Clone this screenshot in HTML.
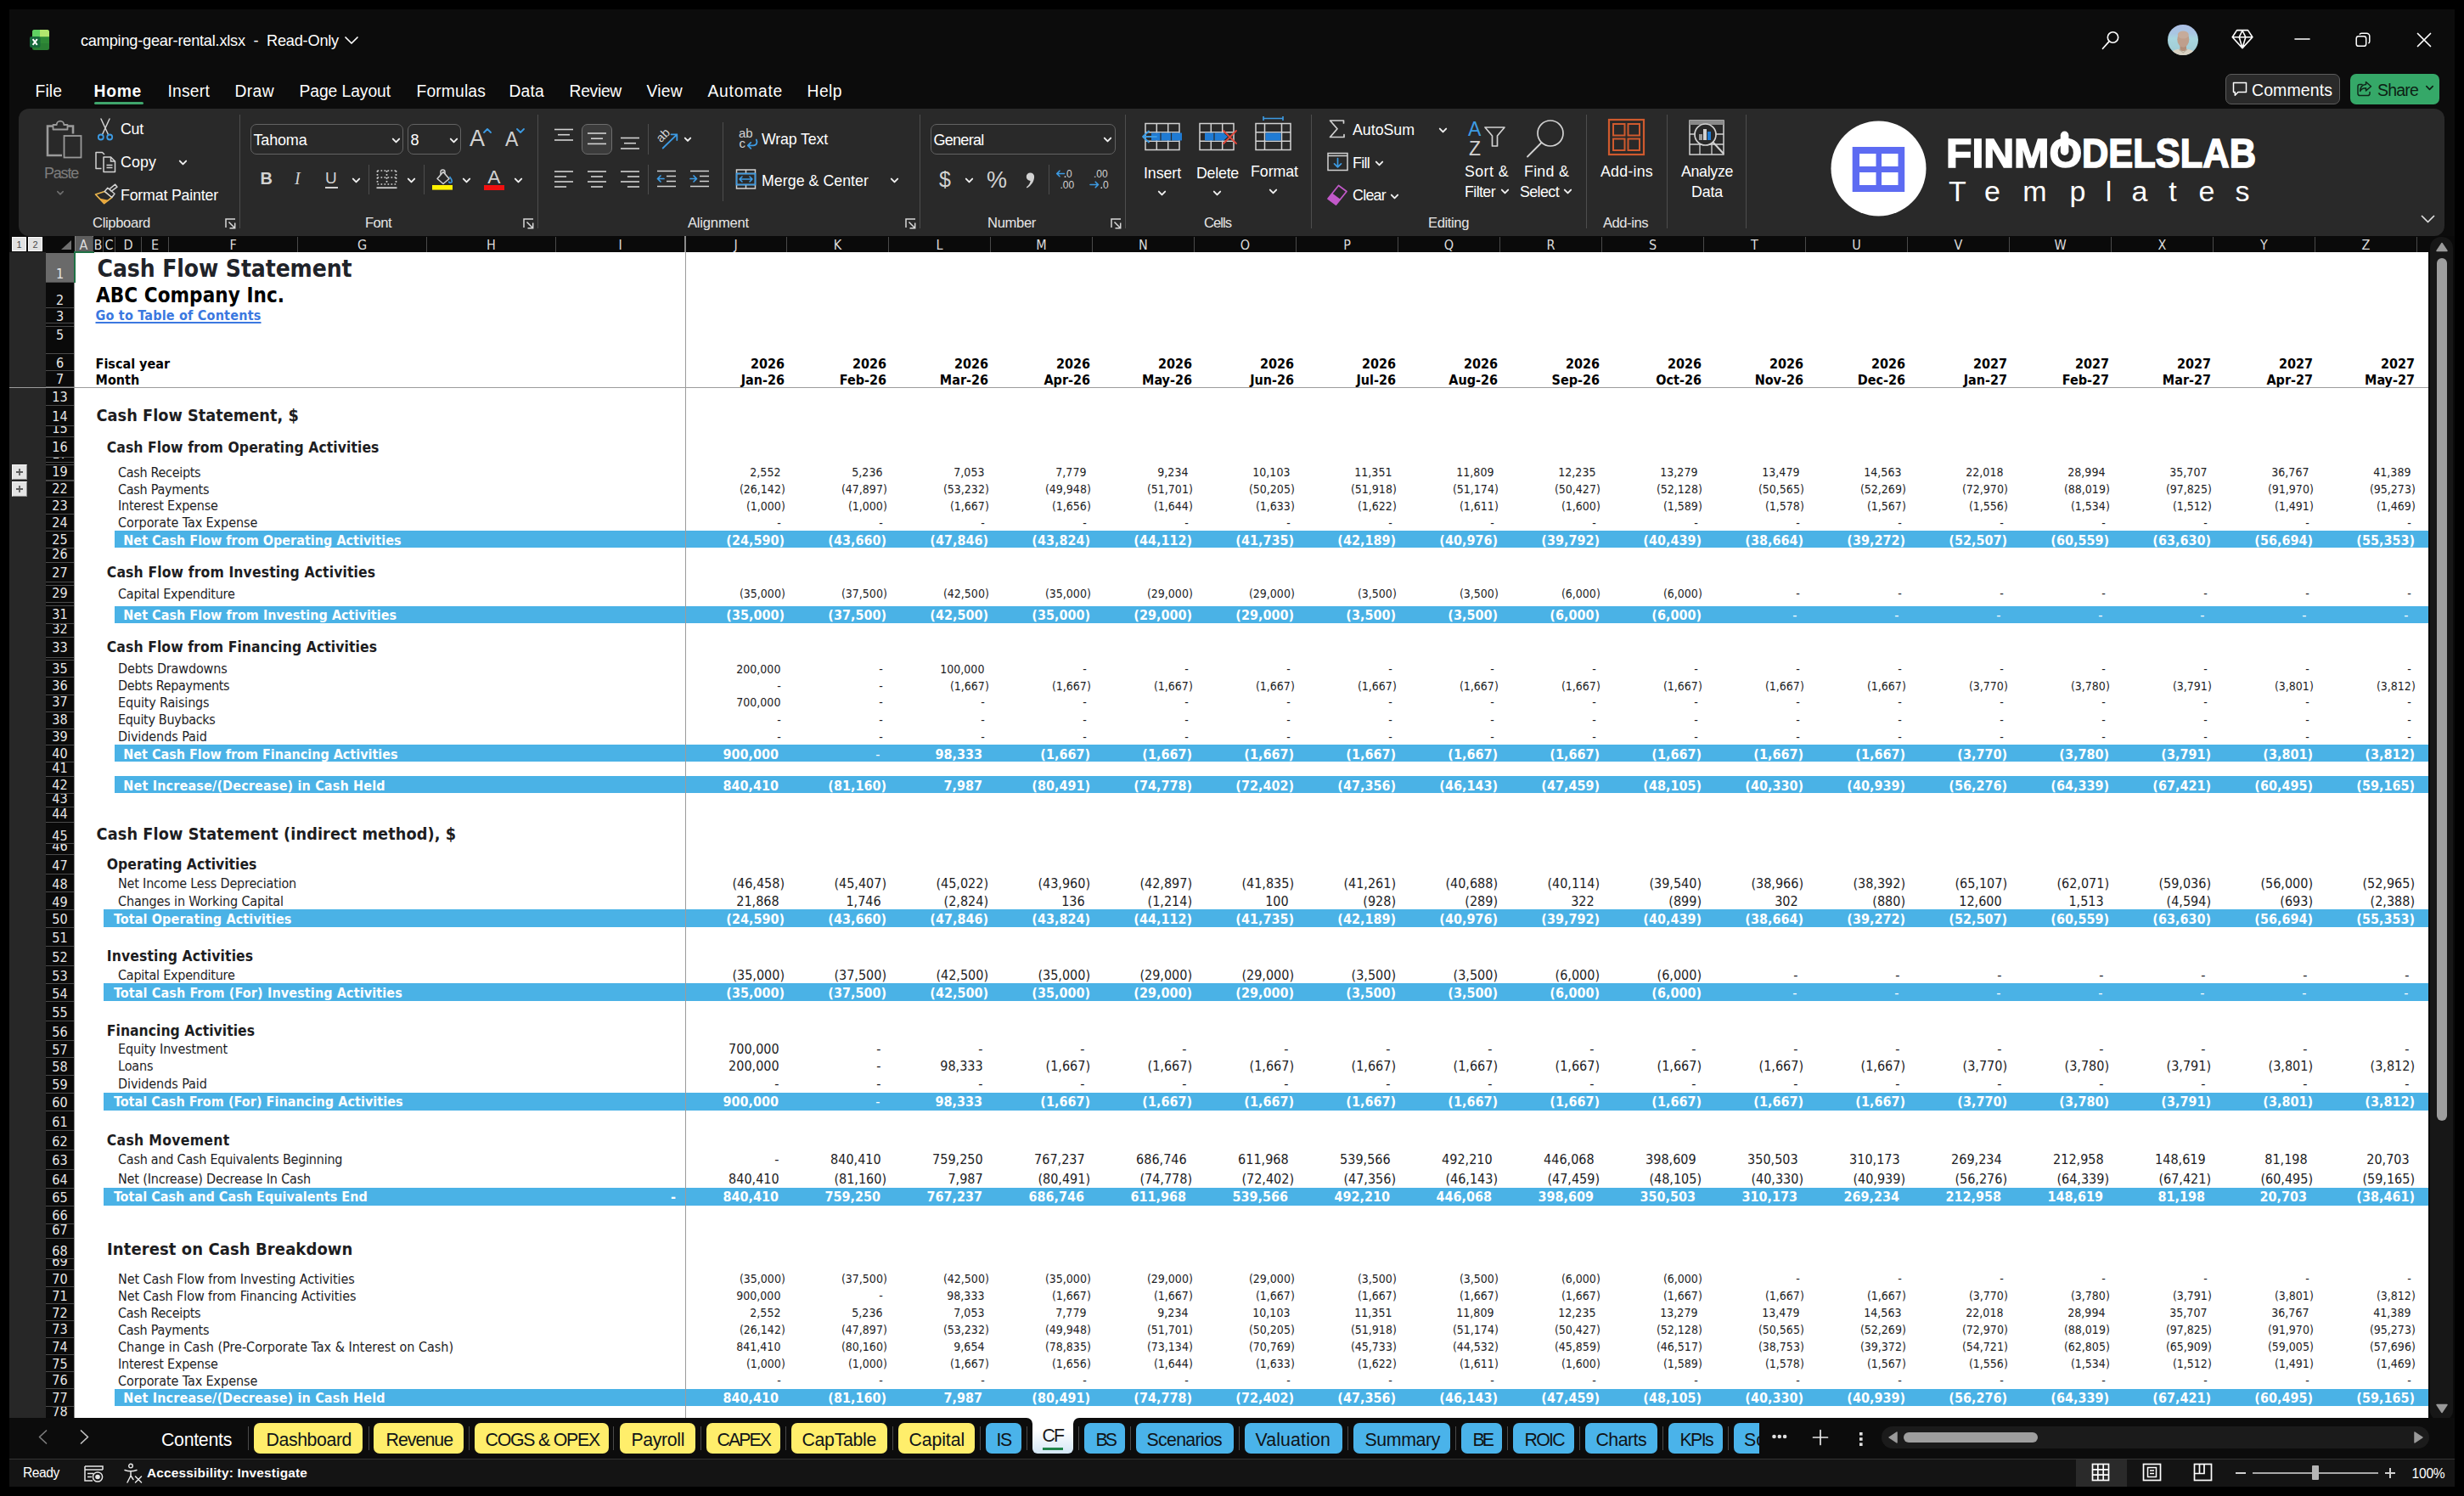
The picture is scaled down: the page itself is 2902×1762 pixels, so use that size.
<!DOCTYPE html>
<html><head><meta charset="utf-8"><title>camping-gear-rental.xlsx - Excel</title><style>
html,body{margin:0;padding:0;background:#000}
#w{position:relative;width:2902px;height:1762px;overflow:hidden;background:#000;font-family:"Liberation Sans",sans-serif}
#w div,#w span,#w svg{position:absolute;box-sizing:border-box}
#w span{white-space:pre;line-height:1}
.u{font-family:"Liberation Sans",sans-serif}
.h{font-family:"DejaVu Sans Condensed","DejaVu Sans",sans-serif;font-stretch:condensed}
#w .lg{font-weight:bold;font-size:47.5px;color:#fff;-webkit-text-stroke:1.600px #fff}#w .lg i,#w .lt i{font-style:normal}#w .lt{font-size:34px;color:#fff}
#w .nr{display:flex;left:807px;width:2040px;line-height:1;font-family:"DejaVu Sans Condensed","DejaVu Sans",sans-serif;font-stretch:condensed;color:#1d1d1f}
#w .nr span{position:static;display:block;width:120px;text-align:right;padding-right:2.2px}
.n14{font-size:14px} .n16{font-size:16px} .nb{font-size:16px;font-weight:bold}
#w .n14 .p{padding-right:7.6px} #w .n14 .d{padding-right:7.3px}
#w .n16 span{padding-right:3px} #w .n16 .p{padding-right:9.4px} #w .n16 .d{padding-right:9.6px}
#w .nb span{padding-right:3px} #w .nb .p{padding-right:10px} #w .nb .d{padding-right:10.5px;font-weight:normal}
#w .nw{color:#fff}
</style></head><body><div id="w"><div style="left:11px;top:11px;width:2880px;height:1740px;background:#0c0c0c"></div><svg style="left:34px;top:33px;" width="26" height="28" viewBox="0 0 26 28">
<rect x="4" y="2" width="20" height="24" rx="2.5" fill="#2a7f33"/>
<path d="M4 4.5a2.5 2.5 0 0 1 2.5-2.5H13v8.5H4z" fill="#5fd062"/>
<path d="M13 2h8.5A2.5 2.5 0 0 1 24 4.5v6H13z" fill="#b3e76e"/>
<path d="M13 10.5h11V18H13z" fill="#2f8a36"/>
<rect x="1" y="10" width="12.5" height="13" rx="2" fill="#17693b"/>
<path d="M4.6 13.2l5.2 6.6M9.8 13.2l-5.2 6.6" stroke="#fff" stroke-width="2" fill="none"/>
</svg><span class="u" style="left:95.0px;top:39.0px;font-size:18.2px;color:#ffffff;letter-spacing:-0.22px;">camping-gear-rental.xlsx  -  Read-Only</span><svg style="left:405px;top:42px;" width="18" height="12" viewBox="0 0 18 12"><polyline points="2,2 9,9 16,2" fill="none" stroke="#fff" stroke-width="1.7" stroke-linecap="round" stroke-linejoin="round"/></svg><svg style="left:2474px;top:35px;" width="24" height="25" viewBox="0 0 24 25"><circle cx="14.5" cy="9" r="6.2" fill="none" stroke="#fff" stroke-width="1.6"/><path d="M10.2 13.6L2.5 22.3" stroke="#fff" stroke-width="1.7" stroke-linecap="round"/></svg><svg style="left:2552px;top:28px;" width="38" height="38" viewBox="0 0 38 38"><defs><clipPath id="av"><circle cx="19" cy="19" r="18"/></clipPath>
<linearGradient id="avg" x1="0" y1="0" x2="0" y2="1"><stop offset="0" stop-color="#aebfe6"/><stop offset="0.300" stop-color="#a9c6e2"/><stop offset="0.450" stop-color="#a8d6df"/><stop offset="1" stop-color="#9fc9d2"/></linearGradient></defs>
<g clip-path="url(#av)"><rect width="38" height="38" fill="url(#avg)"/>
<path d="M3 38c1-6 7-8.500 16-8.500s15 2.500 16 8.500z" fill="#d9d2c3"/>
<rect x="15.500" y="25" width="7.500" height="7" fill="#b18e79"/>
<ellipse cx="19.300" cy="18.500" rx="7" ry="9.300" fill="#bf9f8c"/>
<ellipse cx="19.300" cy="13" rx="6.500" ry="4.500" fill="#c6ab9a"/>
<path d="M14.500 30l4.800 4 4.800-4" fill="none" stroke="#b9b09f" stroke-width="1.200"/>
</g></svg><svg style="left:2627px;top:33px;" width="28" height="26" viewBox="0 0 28 26"><path d="M7.500 2.600H20.500L25.900 10.700 14 23.600 2.200 10.700z M2.200 10.700H25.900 M10.200 10.700L14 3l3.800 7.700 M10.200 10.700L14 23.600l3.800-12.900" fill="none" stroke="#fff" stroke-width="1.600" stroke-linejoin="round"/></svg><svg style="left:2702px;top:44px;" width="20" height="4" viewBox="0 0 20 4"><path d="M1 2h17" stroke="#fff" stroke-width="1.6" stroke-linecap="round"/></svg><svg style="left:2773px;top:37px;" width="20" height="20" viewBox="0 0 20 20"><rect x="2.2" y="5.8" width="11.5" height="11.5" rx="2.6" fill="none" stroke="#fff" stroke-width="1.5"/><path d="M6 3.6a2.4 2.4 0 0 1 2.2-1.4h6.2a3.4 3.4 0 0 1 3.4 3.4v6.2a2.4 2.4 0 0 1-1.4 2.2" fill="none" stroke="#fff" stroke-width="1.5"/></svg><svg style="left:2845px;top:37px;" width="20" height="20" viewBox="0 0 20 20"><path d="M2.5 2.5l15 15M17.5 2.5l-15 15" stroke="#fff" stroke-width="1.7" stroke-linecap="round"/></svg><span class="u" style="left:41.5px;top:98.0px;font-size:19.3px;color:#ffffff;letter-spacing:0.11px;">File</span><span class="u" style="left:110.5px;top:98.0px;font-size:19.3px;color:#ffffff;font-weight:bold;letter-spacing:0.73px;">Home</span><span class="u" style="left:197.5px;top:98.0px;font-size:19.3px;color:#ffffff;letter-spacing:0.21px;">Insert</span><span class="u" style="left:276.5px;top:98.0px;font-size:19.3px;color:#ffffff;letter-spacing:0.38px;">Draw</span><span class="u" style="left:352.5px;top:98.0px;font-size:19.3px;color:#ffffff;letter-spacing:-0.07px;">Page Layout</span><span class="u" style="left:490.5px;top:98.0px;font-size:19.3px;color:#ffffff;letter-spacing:0.14px;">Formulas</span><span class="u" style="left:599.5px;top:98.0px;font-size:19.3px;color:#ffffff;letter-spacing:0.19px;">Data</span><span class="u" style="left:670.5px;top:98.0px;font-size:19.3px;color:#ffffff;letter-spacing:-0.29px;">Review</span><span class="u" style="left:761.5px;top:98.0px;font-size:19.3px;color:#ffffff;letter-spacing:0.26px;">View</span><span class="u" style="left:833.5px;top:98.0px;font-size:19.3px;color:#ffffff;letter-spacing:0.75px;">Automate</span><span class="u" style="left:950.5px;top:98.0px;font-size:19.3px;color:#ffffff;letter-spacing:0.46px;">Help</span><div style="left:111px;top:120px;width:58px;height:3px;background:#3fa56c;border-radius:1.5px"></div><div style="left:2621px;top:87px;width:135px;height:36px;background:#2a2a2a;border:1px solid #5c5c5c;border-radius:7px"></div><svg style="left:2628px;top:95px;" width="20" height="20" viewBox="0 0 20 20"><path d="M2.5 2.5h15v11h-9.6l-3.6 3.8v-3.8H2.5z" fill="none" stroke="#fff" stroke-width="1.5" stroke-linejoin="round"/></svg><span class="u" style="left:2652.0px;top:97.0px;font-size:19.5px;color:#ffffff;letter-spacing:0.09px;">Comments</span><div style="left:2768px;top:87px;width:105px;height:36px;background:#35a868;border-radius:7px"></div><svg style="left:2774px;top:94px;" width="21" height="21" viewBox="0 0 21 21"><path d="M8 5.5H5.2A2.2 2.2 0 0 0 3 7.7v8.6a2.2 2.2 0 0 0 2.200 2.2h9.6a2.200 2.200 0 0 0 2.2-2.2V14.500" fill="none" stroke="#10281a" stroke-width="1.5" stroke-linecap="round"/><path d="M12.5 2.500l6 5.2-6 5.2v-3.100c-3.6 0-5.500 1.200-6.800 3.600 0.200-4.600 2.400-7.600 6.800-7.800z" fill="none" stroke="#10281a" stroke-width="1.500" stroke-linejoin="round"/></svg><span class="u" style="left:2800.0px;top:97.0px;font-size:19.5px;color:#0d1f14;letter-spacing:-0.81px;">Share</span><svg style="left:2856px;top:100px;" width="11" height="7" viewBox="0 0 11 7"><polyline points="1.8,1.6 5.50,5.40 9.200000000000001,1.6" fill="none" stroke="#0d1f14" stroke-width="1.6" stroke-linecap="round" stroke-linejoin="round"/></svg><div style="left:22px;top:128px;width:2857px;height:150px;background:#292929;border-radius:12px"></div><svg style="left:52px;top:139px;" width="48" height="50" viewBox="0 0 48 50"><path d="M10.500 9.500H4v34.500h17" fill="none" stroke="#9a9a9a" stroke-width="2.600"/><path d="M27.500 9.500H34v9" fill="none" stroke="#9a9a9a" stroke-width="2.600"/>
<path d="M10.500 13.500v-5.500h4.200a4.300 4.300 0 0 1 8.600 0h4.200v5.500z" fill="none" stroke="#9a9a9a" stroke-width="1.800" stroke-linejoin="round"/>
<rect x="23.500" y="21" width="20" height="25.500" fill="none" stroke="#9a9a9a" stroke-width="1.800"/></svg><span class="u" style="left:52.0px;top:195.0px;font-size:18px;color:#7d7d7d;letter-spacing:-1.21px;">Paste</span><svg style="left:66px;top:224px;" width="10" height="6.5" viewBox="0 0 10 6.5"><polyline points="1.8,1.6 5.00,4.90 8.200000000000001,1.6" fill="none" stroke="#6e6e6e" stroke-width="1.6" stroke-linecap="round" stroke-linejoin="round"/></svg><svg style="left:112px;top:138px;" width="24" height="30" viewBox="0 0 24 30"><path d="M7 2l8.500 18.500M17 2l-8.500 18.500" stroke="#d2d2d2" stroke-width="1.500" stroke-linecap="round" fill="none"/>
<circle cx="6.800" cy="23.500" r="3" fill="none" stroke="#3d9be3" stroke-width="1.800"/><circle cx="17.200" cy="23.500" r="3" fill="none" stroke="#3d9be3" stroke-width="1.800"/></svg><span class="u" style="left:142.0px;top:144.0px;font-size:17.8px;color:#ffffff;letter-spacing:-0.22px;">Cut</span><svg style="left:110px;top:177px;" width="28" height="28" viewBox="0 0 28 28"><path d="M9.500 21.500H3V2.500h7.500l2.500 2.500" fill="none" stroke="#d2d2d2" stroke-width="1.500" stroke-linejoin="round"/>
<path d="M12 8h8.500l5 5v12.500H12z" fill="#292929" stroke="#d2d2d2" stroke-width="1.500" stroke-linejoin="round"/><path d="M20.500 8v5h5" fill="none" stroke="#d2d2d2" stroke-width="1.500"/>
<path d="M15.500 17.500h7M15.500 20.500h7" stroke="#d2d2d2" stroke-width="1.500"/></svg><span class="u" style="left:142.0px;top:183.0px;font-size:17.8px;color:#ffffff;letter-spacing:0.12px;">Copy</span><svg style="left:210px;top:188px;" width="11" height="7" viewBox="0 0 11 7"><polyline points="1.8,1.6 5.50,5.40 9.200000000000001,1.6" fill="none" stroke="#f0f0f0" stroke-width="1.9" stroke-linecap="round" stroke-linejoin="round"/></svg><svg style="left:110px;top:215px;" width="30" height="28" viewBox="0 0 30 28"><path d="M2.500 13.900L13.200 10.400 21.800 17.500 12.700 24.600z" fill="none" stroke="#e9b44c" stroke-width="1.600" stroke-linejoin="round"/><path d="M6.800 18.600L17.500 20.800 12.700 24.600z" fill="#e9a63a"/>
<path d="M13.200 10.400L16.800 6.300 25 13.200 21.800 17.500z" fill="#292929" stroke="#d2d2d2" stroke-width="1.500" stroke-linejoin="round"/><path d="M19 7.600L25.700 2.200 28 5.200 21.300 10.200z" fill="#292929" stroke="#d2d2d2" stroke-width="1.500" stroke-linejoin="round"/></svg><span class="u" style="left:142.0px;top:222.0px;font-size:17.8px;color:#ffffff;letter-spacing:-0.19px;">Format Painter</span><span class="u" style="left:109.0px;top:255.0px;font-size:16.6px;color:#e6e6e6;letter-spacing:-0.34px;">Clipboard</span><svg style="left:265px;top:257px;" width="13" height="13" viewBox="0 0 13 13"><path d="M1 11V1h11" fill="none" stroke="#d8d8d8" stroke-width="1.500"/><path d="M4.500 4.500l7 7M11.700 5.500v6.200H5.500" fill="none" stroke="#d8d8d8" stroke-width="1.500"/></svg><div style="left:282px;top:135px;width:1px;height:134px;background:#4d4d4d"></div><div style="left:295px;top:146px;width:180px;height:36px;background:#292929;border:1px solid #636363;border-radius:7px"></div><span class="u" style="left:298.5px;top:156.0px;font-size:18px;color:#ffffff;letter-spacing:-0.17px;">Tahoma</span><svg style="left:461.3px;top:161.5px;" width="11" height="7" viewBox="0 0 11 7"><polyline points="1.8,1.6 5.50,5.40 9.200000000000001,1.6" fill="none" stroke="#f0f0f0" stroke-width="1.9" stroke-linecap="round" stroke-linejoin="round"/></svg><div style="left:480px;top:146px;width:63px;height:36px;background:#292929;border:1px solid #636363;border-radius:7px"></div><span class="u" style="left:483.5px;top:156.0px;font-size:18px;color:#ffffff;letter-spacing:-1.02px;">8</span><svg style="left:529.3px;top:161.5px;" width="11" height="7" viewBox="0 0 11 7"><polyline points="1.8,1.6 5.50,5.40 9.200000000000001,1.6" fill="none" stroke="#f0f0f0" stroke-width="1.9" stroke-linecap="round" stroke-linejoin="round"/></svg><span class="u" style="left:553.0px;top:150.0px;font-size:27px;color:#d2d2d2;">A</span><svg style="left:568px;top:150px;" width="12" height="8" viewBox="0 0 12 8"><polyline points="2,6 6,2 10,6" fill="none" stroke="#3d9be3" stroke-width="1.800" stroke-linecap="round" stroke-linejoin="round"/></svg><span class="u" style="left:595.0px;top:153.0px;font-size:23px;color:#d2d2d2;">A</span><svg style="left:607px;top:150px;" width="12" height="8" viewBox="0 0 12 8"><polyline points="2,2 6,6 10,2" fill="none" stroke="#3d9be3" stroke-width="1.800" stroke-linecap="round" stroke-linejoin="round"/></svg><span class="u" style="left:306.5px;top:200.0px;font-size:20px;color:#d2d2d2;font-weight:bold;">B</span><span class="u" style="left:347.0px;top:200.0px;font-size:20px;color:#d2d2d2;font-style:italic;font-family:'Liberation Serif',serif;">I</span><span class="u" style="left:383.0px;top:200.0px;font-size:19px;color:#d2d2d2;">U</span><div style="left:383px;top:220px;width:15px;height:1.5px;background:#d2d2d2"></div><svg style="left:414px;top:209px;" width="11" height="7" viewBox="0 0 11 7"><polyline points="1.8,1.6 5.50,5.40 9.200000000000001,1.6" fill="none" stroke="#f0f0f0" stroke-width="1.9" stroke-linecap="round" stroke-linejoin="round"/></svg><div style="left:434px;top:194px;width:1px;height:35px;background:#4d4d4d"></div><svg style="left:442px;top:198px;" width="28" height="26" viewBox="0 0 28 26"><path d="M2.500 3h22M2.500 3v16M24.500 3v16M13.500 3v16M2.500 11h22M2.500 19h22" stroke="#d2d2d2" stroke-width="1.700" stroke-dasharray="1.700 2.300" fill="none"/><path d="M1.500 23.200h24" stroke="#d2d2d2" stroke-width="1.800"/></svg><svg style="left:479px;top:209px;" width="11" height="7" viewBox="0 0 11 7"><polyline points="1.8,1.6 5.50,5.40 9.200000000000001,1.6" fill="none" stroke="#f0f0f0" stroke-width="1.9" stroke-linecap="round" stroke-linejoin="round"/></svg><div style="left:499px;top:194px;width:1px;height:35px;background:#4d4d4d"></div><svg style="left:508px;top:198px;" width="27" height="28" viewBox="0 0 27 28"><path d="M7 12.500l7-8 7 8-7 6z" fill="none" stroke="#d2d2d2" stroke-width="1.500" stroke-linejoin="round"/><path d="M11 8V4.500a2.500 2.500 0 0 1 5 0V7" fill="none" stroke="#d2d2d2" stroke-width="1.500"/>
<path d="M21.500 10c2 2.500 2.800 4 2.800 5.500a1.800 1.800 0 0 1-3.600 0" fill="none" stroke="#3d9be3" stroke-width="1.600"/><rect x="1" y="20" width="24" height="5.600" fill="#fff200"/></svg><svg style="left:544px;top:209px;" width="11" height="7" viewBox="0 0 11 7"><polyline points="1.8,1.6 5.50,5.40 9.200000000000001,1.6" fill="none" stroke="#f0f0f0" stroke-width="1.9" stroke-linecap="round" stroke-linejoin="round"/></svg><span class="u" style="left:574.3px;top:197.0px;font-size:22.8px;color:#d2d2d2;">A</span><div style="left:570px;top:218px;width:24px;height:5.6px;background:#f01010"></div><svg style="left:605px;top:209px;" width="11" height="7" viewBox="0 0 11 7"><polyline points="1.8,1.6 5.50,5.40 9.200000000000001,1.6" fill="none" stroke="#f0f0f0" stroke-width="1.9" stroke-linecap="round" stroke-linejoin="round"/></svg><span class="u" style="left:430.0px;top:255.0px;font-size:16.6px;color:#e6e6e6;letter-spacing:-0.55px;">Font</span><svg style="left:616px;top:257px;" width="13" height="13" viewBox="0 0 13 13"><path d="M1 11V1h11" fill="none" stroke="#d8d8d8" stroke-width="1.500"/><path d="M4.500 4.500l7 7M11.700 5.500v6.200H5.500" fill="none" stroke="#d8d8d8" stroke-width="1.500"/></svg><div style="left:633px;top:135px;width:1px;height:134px;background:#4d4d4d"></div><svg style="left:653px;top:150px;" width="22" height="30" viewBox="0 0 22 30"><path d="M0.0 2.5H22.0" stroke="#d2d2d2" stroke-width="1.600"/><path d="M4.0 8.7H18.0" stroke="#d2d2d2" stroke-width="1.600"/><path d="M0.0 15H22.0" stroke="#d2d2d2" stroke-width="1.600"/></svg><div style="left:685px;top:146px;width:36px;height:36px;background:#3b3b3b;border:1px solid #6e6e6e;border-radius:7px"></div><svg style="left:692px;top:154px;" width="22" height="30" viewBox="0 0 22 30"><path d="M0.0 3H22.0" stroke="#d2d2d2" stroke-width="1.600"/><path d="M4.0 9.2H18.0" stroke="#d2d2d2" stroke-width="1.600"/><path d="M0.0 15.4H22.0" stroke="#d2d2d2" stroke-width="1.600"/></svg><svg style="left:731px;top:160px;" width="22" height="30" viewBox="0 0 22 30"><path d="M0.0 2.5H22.0" stroke="#d2d2d2" stroke-width="1.600"/><path d="M4.0 8.7H18.0" stroke="#d2d2d2" stroke-width="1.600"/><path d="M0.0 15H22.0" stroke="#d2d2d2" stroke-width="1.600"/></svg><div style="left:763px;top:146px;width:1px;height:36px;background:#4d4d4d"></div><svg style="left:771px;top:150px;" width="30" height="28" viewBox="0 0 30 28"><text x="7.500" y="18.500" font-family="Liberation Sans,sans-serif" font-size="14.500" fill="#d2d2d2" transform="rotate(-45 7.500 18.500)">ab</text><path d="M9.700 24.500L26.300 8.300M26.300 8.300h-6.800M26.300 8.300v6.800" fill="none" stroke="#3d9be3" stroke-width="1.800" stroke-linecap="round" stroke-linejoin="round"/></svg><svg style="left:805px;top:161px;" width="10" height="6.5" viewBox="0 0 10 6.5"><polyline points="1.8,1.6 5.00,4.90 8.200000000000001,1.6" fill="none" stroke="#f0f0f0" stroke-width="1.9" stroke-linecap="round" stroke-linejoin="round"/></svg><svg style="left:653px;top:200px;" width="22" height="30" viewBox="0 0 22 30"><path d="M0.0 2H22.0" stroke="#d2d2d2" stroke-width="1.600"/><path d="M0.0 8H14.1" stroke="#d2d2d2" stroke-width="1.600"/><path d="M0.0 14H22.0" stroke="#d2d2d2" stroke-width="1.600"/><path d="M0.0 20H14.1" stroke="#d2d2d2" stroke-width="1.600"/></svg><svg style="left:692px;top:200px;" width="22" height="30" viewBox="0 0 22 30"><path d="M0.0 2H22.0" stroke="#d2d2d2" stroke-width="1.600"/><path d="M4.0 8H18.0" stroke="#d2d2d2" stroke-width="1.600"/><path d="M0.0 14H22.0" stroke="#d2d2d2" stroke-width="1.600"/><path d="M4.0 20H18.0" stroke="#d2d2d2" stroke-width="1.600"/></svg><svg style="left:731px;top:200px;" width="22" height="30" viewBox="0 0 22 30"><path d="M0.0 2H22.0" stroke="#d2d2d2" stroke-width="1.600"/><path d="M7.9 8H22.0" stroke="#d2d2d2" stroke-width="1.600"/><path d="M0.0 14H22.0" stroke="#d2d2d2" stroke-width="1.600"/><path d="M7.9 20H22.0" stroke="#d2d2d2" stroke-width="1.600"/></svg><div style="left:763px;top:194px;width:1px;height:35px;background:#4d4d4d"></div><svg style="left:773px;top:199px;" width="24" height="24" viewBox="0 0 24 24"><path d="M1 2.500h22M12 8.500h11M12 14.500h11M1 20.500h22" stroke="#d2d2d2" stroke-width="1.600"/><path d="M9 11.500H1.500M5 8l-3.500 3.500L5 15" fill="none" stroke="#3d9be3" stroke-width="1.700" stroke-linecap="round" stroke-linejoin="round"/></svg><svg style="left:812px;top:199px;" width="24" height="24" viewBox="0 0 24 24"><path d="M1 2.500h22M12 8.500h11M12 14.500h11M1 20.500h22" stroke="#d2d2d2" stroke-width="1.600"/><path d="M1 11.500h7.500M5 8l3.500 3.500L5 15" fill="none" stroke="#3d9be3" stroke-width="1.700" stroke-linecap="round" stroke-linejoin="round"/></svg><div style="left:851px;top:144px;width:1px;height:93px;background:#4d4d4d"></div><svg style="left:868px;top:150px;" width="28" height="28" viewBox="0 0 28 28"><text x="2" y="12.400" font-family="Liberation Sans,sans-serif" font-size="15" fill="#d2d2d2">ab</text><text x="2.600" y="24.200" font-family="Liberation Sans,sans-serif" font-size="15" fill="#d2d2d2">c</text>
<path d="M22.800 14.500c1.600 3.200 0.300 6.900-3.600 6.900H12.900M16.300 17.900l-3.500 3.500 3.500 3.500" fill="none" stroke="#3d9be3" stroke-width="1.800" stroke-linecap="round" stroke-linejoin="round"/></svg><span class="u" style="left:897.0px;top:156.0px;font-size:17.8px;color:#ffffff;letter-spacing:-0.15px;">Wrap Text</span><svg style="left:866px;top:198px;" width="26" height="26" viewBox="0 0 26 26"><path d="M1.500 2h22v22h-22z M1.500 6.500h22M1.500 19.500h22M12.500 2v4.500M12.500 19.500V24" fill="none" stroke="#d2d2d2" stroke-width="1.500"/>
<rect x="1.500" y="6.500" width="22" height="13" fill="none" stroke="#3d9be3" stroke-width="1.700"/><path d="M5 13h15M8 10l-3 3 3 3M17 10l3 3-3 3" fill="none" stroke="#3d9be3" stroke-width="1.600" stroke-linecap="round" stroke-linejoin="round"/></svg><span class="u" style="left:897.0px;top:205.0px;font-size:17.8px;color:#ffffff;letter-spacing:0.03px;">Merge &amp; Center</span><svg style="left:1048px;top:209px;" width="11" height="7" viewBox="0 0 11 7"><polyline points="1.8,1.6 5.50,5.40 9.200000000000001,1.6" fill="none" stroke="#f0f0f0" stroke-width="1.9" stroke-linecap="round" stroke-linejoin="round"/></svg><span class="u" style="left:810.0px;top:255.0px;font-size:16.6px;color:#e6e6e6;letter-spacing:-0.2px;">Alignment</span><svg style="left:1066px;top:257px;" width="13" height="13" viewBox="0 0 13 13"><path d="M1 11V1h11" fill="none" stroke="#d8d8d8" stroke-width="1.500"/><path d="M4.500 4.500l7 7M11.700 5.500v6.200H5.500" fill="none" stroke="#d8d8d8" stroke-width="1.500"/></svg><div style="left:1083px;top:135px;width:1px;height:134px;background:#4d4d4d"></div><div style="left:1096px;top:146px;width:218px;height:36px;background:#292929;border:1px solid #636363;border-radius:7px"></div><span class="u" style="left:1099.5px;top:156.0px;font-size:18px;color:#ffffff;letter-spacing:-0.72px;">General</span><svg style="left:1299px;top:161px;" width="11" height="7" viewBox="0 0 11 7"><polyline points="1.8,1.6 5.50,5.40 9.200000000000001,1.6" fill="none" stroke="#f0f0f0" stroke-width="1.9" stroke-linecap="round" stroke-linejoin="round"/></svg><span class="u" style="left:1106.0px;top:199.0px;font-size:25px;color:#d2d2d2;">$</span><svg style="left:1136px;top:209px;" width="11" height="7" viewBox="0 0 11 7"><polyline points="1.8,1.6 5.50,5.40 9.200000000000001,1.6" fill="none" stroke="#f0f0f0" stroke-width="1.9" stroke-linecap="round" stroke-linejoin="round"/></svg><span class="u" style="left:1162.0px;top:199.0px;font-size:27px;color:#d2d2d2;letter-spacing:0.98px;">%</span><svg style="left:1206px;top:201px;" width="16" height="24" viewBox="0 0 16 24"><path d="M7.500 2.500a4.600 4.600 0 0 1 4.600 4.600c0 5.500-3.500 10.500-8.500 13.500l-0.800-1.200c2.800-2 4.500-4.500 4.800-7.400a4.700 4.700 0 0 1-4.800-4.800a4.600 4.600 0 0 1 4.700-4.700z" fill="#d2d2d2"/></svg><div style="left:1235px;top:194px;width:1px;height:35px;background:#4d4d4d"></div><svg style="left:1243px;top:198px;" width="28" height="27" viewBox="0 0 28 27"><text x="13" y="11" font-family="Liberation Sans,sans-serif" font-size="12" fill="#d2d2d2">0</text><text x="5.500" y="24" font-family="Liberation Sans,sans-serif" font-size="12" fill="#d2d2d2">.00</text><circle cx="11.500" cy="10.200" r="0.900" fill="#d2d2d2"/>
<path d="M10.500 6.500H2M5 3.200L1.700 6.500 5 9.800" fill="none" stroke="#3d9be3" stroke-width="1.600" stroke-linecap="round" stroke-linejoin="round"/></svg><svg style="left:1282px;top:198px;" width="28" height="27" viewBox="0 0 28 27"><text x="6" y="11" font-family="Liberation Sans,sans-serif" font-size="12" fill="#d2d2d2">.00</text><text x="17" y="24" font-family="Liberation Sans,sans-serif" font-size="12" fill="#d2d2d2">0</text><circle cx="15.300" cy="23.200" r="0.900" fill="#d2d2d2"/>
<path d="M2 19.500h9.500M8.200 16.200l3.300 3.300-3.300 3.300" fill="none" stroke="#3d9be3" stroke-width="1.600" stroke-linecap="round" stroke-linejoin="round"/></svg><span class="u" style="left:1163.0px;top:255.0px;font-size:16.6px;color:#e6e6e6;letter-spacing:-0.34px;">Number</span><svg style="left:1308px;top:257px;" width="13" height="13" viewBox="0 0 13 13"><path d="M1 11V1h11" fill="none" stroke="#d8d8d8" stroke-width="1.500"/><path d="M4.500 4.500l7 7M11.700 5.500v6.200H5.500" fill="none" stroke="#d8d8d8" stroke-width="1.500"/></svg><div style="left:1325px;top:135px;width:1px;height:134px;background:#4d4d4d"></div><svg style="left:1343px;top:143px;" width="52" height="38" viewBox="0 0 52 38"><path d="M6 2.500h40v31H6z M6 12.800h40M6 23.200h40M19.300 2.500v31M32.700 2.500v31" fill="none" stroke="#d2d2d2" stroke-width="1.500"/>
<rect x="13" y="13.500" width="36" height="9" fill="#1f7bd4"/><path d="M24 13.500v9M36.500 13.500v9" stroke="#292929" stroke-width="1.200"/>
<path d="M19 18H3.500M10 11.500L3 18l7 6.500" fill="none" stroke="#3d9be3" stroke-width="1.800" stroke-linecap="round" stroke-linejoin="round"/></svg><span class="u" style="left:1347.0px;top:196.0px;font-size:17.8px;color:#ffffff;letter-spacing:-0.08px;">Insert</span><svg style="left:1363px;top:224px;" width="11" height="7" viewBox="0 0 11 7"><polyline points="1.8,1.6 5.50,5.40 9.200000000000001,1.6" fill="none" stroke="#f0f0f0" stroke-width="1.9" stroke-linecap="round" stroke-linejoin="round"/></svg><svg style="left:1410px;top:143px;" width="50" height="38" viewBox="0 0 50 38"><path d="M3 2.500h40v31H3z M3 12.800h40M3 23.200h40M16.300 2.500v31M29.700 2.500v31" fill="none" stroke="#d2d2d2" stroke-width="1.500"/>
<rect x="9" y="13.500" width="22" height="9" fill="#1f7bd4"/><path d="M20 13.500v9" stroke="#292929" stroke-width="1.200"/><path d="M31 13.500l5 4.500-5 4.500z" fill="#1f7bd4"/>
<path d="M31 11l15 15M46 11l-15 15" stroke="#e0483c" stroke-width="1.800" stroke-linecap="round"/></svg><span class="u" style="left:1409.0px;top:196.0px;font-size:17.8px;color:#ffffff;letter-spacing:-0.23px;">Delete</span><svg style="left:1428px;top:224px;" width="11" height="7" viewBox="0 0 11 7"><polyline points="1.8,1.6 5.50,5.40 9.200000000000001,1.6" fill="none" stroke="#f0f0f0" stroke-width="1.9" stroke-linecap="round" stroke-linejoin="round"/></svg><svg style="left:1476px;top:136px;" width="48" height="45" viewBox="0 0 48 45"><path d="M3 9.500h41v31H3z M3 19.800h41M3 30.200h41M13.500 9.500v31M33.500 9.500v31" fill="none" stroke="#d2d2d2" stroke-width="1.500"/>
<rect x="14.500" y="20.500" width="18" height="9" fill="#1f7bd4"/>
<path d="M12 3.500h23M12 1v5M35 1v5" stroke="#3d9be3" stroke-width="1.600"/></svg><span class="u" style="left:1473.0px;top:194.0px;font-size:17.8px;color:#ffffff;letter-spacing:-0.05px;">Format</span><svg style="left:1494px;top:222px;" width="11" height="7" viewBox="0 0 11 7"><polyline points="1.8,1.6 5.50,5.40 9.200000000000001,1.6" fill="none" stroke="#f0f0f0" stroke-width="1.9" stroke-linecap="round" stroke-linejoin="round"/></svg><span class="u" style="left:1418.0px;top:255.0px;font-size:16.6px;color:#e6e6e6;letter-spacing:-0.98px;">Cells</span><div style="left:1544px;top:135px;width:1px;height:134px;background:#4d4d4d"></div><svg style="left:1563px;top:139px;" width="24" height="26" viewBox="0 0 24 26"><path d="M19.500 6V3H3.500l8.500 9.800-8.500 9.700h16.500v-3" fill="none" stroke="#d2d2d2" stroke-width="1.700" stroke-linejoin="round" stroke-linecap="round"/></svg><span class="u" style="left:1593.0px;top:145.0px;font-size:17.8px;color:#ffffff;letter-spacing:-0.02px;">AutoSum</span><svg style="left:1694px;top:150px;" width="11" height="7" viewBox="0 0 11 7"><polyline points="1.8,1.6 5.50,5.40 9.200000000000001,1.6" fill="none" stroke="#f0f0f0" stroke-width="1.9" stroke-linecap="round" stroke-linejoin="round"/></svg><svg style="left:1562px;top:178px;" width="27" height="25" viewBox="0 0 27 25"><path d="M2 2.500h23v20H2z" fill="none" stroke="#d2d2d2" stroke-width="1.500"/><path d="M2 5.500h23" stroke="#d2d2d2" stroke-width="1.500"/><path d="M13.500 8.500v10M9.500 14.800l4 4 4-4" fill="none" stroke="#3d9be3" stroke-width="1.700" stroke-linecap="round" stroke-linejoin="round"/></svg><span class="u" style="left:1593.0px;top:184.0px;font-size:17.8px;color:#ffffff;letter-spacing:-0.68px;">Fill</span><svg style="left:1619px;top:189px;" width="11" height="7" viewBox="0 0 11 7"><polyline points="1.8,1.6 5.50,5.40 9.200000000000001,1.6" fill="none" stroke="#f0f0f0" stroke-width="1.9" stroke-linecap="round" stroke-linejoin="round"/></svg><svg style="left:1561px;top:216px;" width="28" height="28" viewBox="0 0 28 28"><path d="M15.500 2.500l9.500 7-12.500 15.500-9.500-7z" fill="none" stroke="#c259c9" stroke-width="1.700" stroke-linejoin="round"/><path d="M8.300 11.800l9.400 7-5.200 6.200-9.500-7z" fill="#c259c9"/></svg><span class="u" style="left:1593.0px;top:222.0px;font-size:17.8px;color:#ffffff;letter-spacing:-0.7px;">Clear</span><svg style="left:1637px;top:228px;" width="11" height="7" viewBox="0 0 11 7"><polyline points="1.8,1.6 5.50,5.40 9.200000000000001,1.6" fill="none" stroke="#f0f0f0" stroke-width="1.9" stroke-linecap="round" stroke-linejoin="round"/></svg><svg style="left:1728px;top:139px;" width="46" height="46" viewBox="0 0 46 46"><text x="1" y="21" font-family="Liberation Sans,sans-serif" font-size="23" fill="#3d9be3">A</text><text x="2" y="44" font-family="Liberation Sans,sans-serif" font-size="23" fill="#d2d2d2">Z</text>
<path d="M21 11h23l-8.500 10v12h-6V21z" fill="none" stroke="#d2d2d2" stroke-width="1.700" stroke-linejoin="round"/></svg><span class="u" style="left:1725.0px;top:194.0px;font-size:17.8px;color:#ffffff;letter-spacing:0.43px;">Sort &amp;</span><span class="u" style="left:1725.0px;top:218.0px;font-size:17.8px;color:#ffffff;letter-spacing:-0.59px;">Filter</span><svg style="left:1767px;top:222px;" width="11" height="7" viewBox="0 0 11 7"><polyline points="1.8,1.6 5.50,5.40 9.200000000000001,1.6" fill="none" stroke="#f0f0f0" stroke-width="1.9" stroke-linecap="round" stroke-linejoin="round"/></svg><svg style="left:1796px;top:139px;" width="50" height="48" viewBox="0 0 50 48"><circle cx="30" cy="18" r="15" fill="none" stroke="#d2d2d2" stroke-width="1.700"/><path d="M19.500 29L3 45.500" stroke="#d2d2d2" stroke-width="1.800" stroke-linecap="round"/></svg><span class="u" style="left:1795.0px;top:194.0px;font-size:17.8px;color:#ffffff;letter-spacing:0.27px;">Find &amp;</span><span class="u" style="left:1790.0px;top:218.0px;font-size:17.8px;color:#ffffff;letter-spacing:-0.57px;">Select</span><svg style="left:1841px;top:222px;" width="11" height="7" viewBox="0 0 11 7"><polyline points="1.8,1.6 5.50,5.40 9.200000000000001,1.6" fill="none" stroke="#f0f0f0" stroke-width="1.9" stroke-linecap="round" stroke-linejoin="round"/></svg><span class="u" style="left:1682.0px;top:255.0px;font-size:16.6px;color:#e6e6e6;letter-spacing:-0.39px;">Editing</span><div style="left:1868px;top:135px;width:1px;height:134px;background:#4d4d4d"></div><svg style="left:1893px;top:139px;" width="46" height="46" viewBox="0 0 46 46"><rect x="2" y="2" width="41" height="41" fill="none" stroke="#cf5a2e" stroke-width="2.200"/>
<rect x="7" y="7" width="13.500" height="13.500" fill="none" stroke="#cf5a2e" stroke-width="2"/><rect x="24.500" y="7" width="13.500" height="13.500" fill="none" stroke="#cf5a2e" stroke-width="2"/>
<rect x="7" y="24.500" width="13.500" height="13.500" fill="none" stroke="#cf5a2e" stroke-width="2"/><rect x="24.500" y="24.500" width="13.500" height="13.500" fill="none" stroke="#cf5a2e" stroke-width="2"/></svg><span class="u" style="left:1885.0px;top:194.0px;font-size:17.8px;color:#ffffff;letter-spacing:0.24px;">Add-ins</span><span class="u" style="left:1888.0px;top:255.0px;font-size:16.6px;color:#e6e6e6;letter-spacing:-0.47px;">Add-ins</span><div style="left:1963px;top:135px;width:1px;height:134px;background:#4d4d4d"></div><svg style="left:1988px;top:140px;" width="46" height="46" viewBox="0 0 46 46"><path d="M2 2h40v40H2z" fill="none" stroke="#d2d2d2" stroke-width="1.500"/><rect x="2" y="2" width="40" height="5" fill="#8a8a8a"/>
<path d="M2 18h40M2 30h40M14 30v12M28 18v24" stroke="#d2d2d2" stroke-width="1.300"/>
<circle cx="20.500" cy="18.500" r="12.500" fill="#292929" stroke="#d2d2d2" stroke-width="1.700"/><path d="M29.500 27.500L42 41" stroke="#d2d2d2" stroke-width="2"/>
<rect x="13" y="18" width="4" height="7" fill="#9a9a9a"/><rect x="18" y="12" width="4" height="13" fill="#d2d2d2"/><rect x="23" y="15" width="4" height="10" fill="#1f7bd4"/></svg><span class="u" style="left:1980.0px;top:194.0px;font-size:17.8px;color:#ffffff;letter-spacing:-0.32px;">Analyze</span><span class="u" style="left:1992.0px;top:218.0px;font-size:17.8px;color:#ffffff;letter-spacing:-0.14px;">Data</span><div style="left:2056px;top:135px;width:1px;height:134px;background:#4d4d4d"></div><svg style="left:2156px;top:142px;" width="114" height="114" viewBox="0 0 114 114"><circle cx="56.500" cy="56.500" r="56" fill="#fff"/><rect x="25.700" y="31" width="61.500" height="53" fill="#5d6bf2"/>
<rect x="34" y="39" width="19.500" height="15" fill="#fff"/><rect x="60" y="39" width="19.500" height="15" fill="#fff"/><rect x="34" y="61" width="19.500" height="15" fill="#fff"/><rect x="60" y="61" width="19.500" height="15" fill="#fff"/></svg><svg style="left:2851px;top:253px;" width="17" height="11" viewBox="0 0 17 11"><polyline points="1.500,1.500 8.500,8.500 15.500,1.500" fill="none" stroke="#e0e0e0" stroke-width="1.700" stroke-linecap="round" stroke-linejoin="round"/></svg><span class="u lg" style="left:2292.200px;top:157px"><i style="display:inline-block;transform:scaleX(1.047);transform-origin:0 0">FINMO</i><i style="display:inline-block;transform:scaleX(0.914);transform-origin:0 0;margin-left:6.300px">DELSLAB</i></span><svg style="left:2426px;top:153px;" width="12" height="32" viewBox="0 0 12 32"><rect x="0.800" y="1.500" width="9.600" height="28.500" rx="4.800" fill="#fff"/></svg><span class="u lt" style="left:2295px;top:208px"><i style="letter-spacing:21.3px">T</i><i style="letter-spacing:26.2px">e</i><i style="letter-spacing:26.9px">m</i><i style="letter-spacing:23.5px">p</i><i style="letter-spacing:23px">l</i><i style="letter-spacing:25px">a</i><i style="letter-spacing:25.7px">t</i><i style="letter-spacing:24px">e</i><i>s</i></span><div style="left:11px;top:297px;width:43px;height:1373px;background:#272727"></div><div style="left:54px;top:278px;width:2806px;height:19px;background:#0a0a0a"></div><div style="left:54px;top:297px;width:34px;height:1373px;background:#0a0a0a"></div><div style="left:88px;top:297px;width:2772px;height:1373px;background:#fff"></div><div style="left:87px;top:297px;width:1px;height:1373px;background:#8c8c8c"></div><div style="left:14px;top:279px;width:17px;height:17px;background:#e2e2e2;border:1px solid #fbfbfb"></div><span class="u" style="left:19.4px;top:283.0px;font-size:11px;color:#4a4a4a;">1</span><div style="left:33px;top:279px;width:17px;height:17px;background:#e2e2e2;border:1px solid #fbfbfb"></div><span class="u" style="left:38.4px;top:283.0px;font-size:11px;color:#4a4a4a;">2</span><svg style="left:70px;top:282px;" width="16" height="14" viewBox="0 0 16 14"><polygon points="14,1 14,12 2,12" fill="#6f6f6f"/></svg><div style="left:88px;top:278px;width:22px;height:19px;background:#5e5e5e;border-left:1px solid #858585;border-right:1px solid #858585"></div><div style="left:87px;top:296px;width:24px;height:2px;background:#1e7145"></div><span class="h" style="left:93.6px;top:281.0px;font-size:16px;color:#dcdcdc;">A</span><div style="left:109px;top:279px;width:1px;height:18px;background:#4a4a4a"></div><span class="h" style="left:110.6px;top:281.0px;font-size:16px;color:#dcdcdc;">B</span><div style="left:121px;top:279px;width:1px;height:18px;background:#4a4a4a"></div><span class="h" style="left:123.5px;top:281.0px;font-size:16px;color:#dcdcdc;">C</span><div style="left:135px;top:279px;width:1px;height:18px;background:#4a4a4a"></div><span class="h" style="left:145.5px;top:281.0px;font-size:16px;color:#dcdcdc;">D</span><div style="left:166px;top:279px;width:1px;height:18px;background:#4a4a4a"></div><span class="h" style="left:178.0px;top:281.0px;font-size:16px;color:#dcdcdc;">E</span><div style="left:198px;top:279px;width:1px;height:18px;background:#4a4a4a"></div><span class="h" style="left:270.4px;top:281.0px;font-size:16px;color:#dcdcdc;">F</span><div style="left:350px;top:279px;width:1px;height:18px;background:#4a4a4a"></div><span class="h" style="left:420.9px;top:281.0px;font-size:16px;color:#dcdcdc;">G</span><div style="left:502px;top:279px;width:1px;height:18px;background:#4a4a4a"></div><span class="h" style="left:573.1px;top:281.0px;font-size:16px;color:#dcdcdc;">H</span><div style="left:654px;top:279px;width:1px;height:18px;background:#4a4a4a"></div><span class="h" style="left:728.4px;top:281.0px;font-size:16px;color:#dcdcdc;">I</span><div style="left:806px;top:279px;width:1px;height:18px;background:#4a4a4a"></div><span class="h" style="left:864.4px;top:281.0px;font-size:16px;color:#dcdcdc;">J</span><div style="left:926px;top:279px;width:1px;height:18px;background:#4a4a4a"></div><span class="h" style="left:981.8px;top:281.0px;font-size:16px;color:#dcdcdc;">K</span><div style="left:1046px;top:279px;width:1px;height:18px;background:#4a4a4a"></div><span class="h" style="left:1102.5px;top:281.0px;font-size:16px;color:#dcdcdc;">L</span><div style="left:1166px;top:279px;width:1px;height:18px;background:#4a4a4a"></div><span class="h" style="left:1220.3px;top:281.0px;font-size:16px;color:#dcdcdc;">M</span><div style="left:1286px;top:279px;width:1px;height:18px;background:#4a4a4a"></div><span class="h" style="left:1341.1px;top:281.0px;font-size:16px;color:#dcdcdc;">N</span><div style="left:1406px;top:279px;width:1px;height:18px;background:#4a4a4a"></div><span class="h" style="left:1460.8px;top:281.0px;font-size:16px;color:#dcdcdc;">O</span><div style="left:1526px;top:279px;width:1px;height:18px;background:#4a4a4a"></div><span class="h" style="left:1582.2px;top:281.0px;font-size:16px;color:#dcdcdc;">P</span><div style="left:1646px;top:279px;width:1px;height:18px;background:#4a4a4a"></div><span class="h" style="left:1700.8px;top:281.0px;font-size:16px;color:#dcdcdc;">Q</span><div style="left:1766px;top:279px;width:1px;height:18px;background:#4a4a4a"></div><span class="h" style="left:1821.5px;top:281.0px;font-size:16px;color:#dcdcdc;">R</span><div style="left:1886px;top:279px;width:1px;height:18px;background:#4a4a4a"></div><span class="h" style="left:1941.9px;top:281.0px;font-size:16px;color:#dcdcdc;">S</span><div style="left:2006px;top:279px;width:1px;height:18px;background:#4a4a4a"></div><span class="h" style="left:2062.1px;top:281.0px;font-size:16px;color:#dcdcdc;">T</span><div style="left:2126px;top:279px;width:1px;height:18px;background:#4a4a4a"></div><span class="h" style="left:2181.2px;top:281.0px;font-size:16px;color:#dcdcdc;">U</span><div style="left:2246px;top:279px;width:1px;height:18px;background:#4a4a4a"></div><span class="h" style="left:2301.6px;top:281.0px;font-size:16px;color:#dcdcdc;">V</span><div style="left:2366px;top:279px;width:1px;height:18px;background:#4a4a4a"></div><span class="h" style="left:2419.4px;top:281.0px;font-size:16px;color:#dcdcdc;">W</span><div style="left:2486px;top:279px;width:1px;height:18px;background:#4a4a4a"></div><span class="h" style="left:2541.6px;top:281.0px;font-size:16px;color:#dcdcdc;">X</span><div style="left:2606px;top:279px;width:1px;height:18px;background:#4a4a4a"></div><span class="h" style="left:2662.1px;top:281.0px;font-size:16px;color:#dcdcdc;">Y</span><div style="left:2726px;top:279px;width:1px;height:18px;background:#4a4a4a"></div><span class="h" style="left:2781.6px;top:281.0px;font-size:16px;color:#dcdcdc;">Z</span><div style="left:2846px;top:279px;width:1px;height:18px;background:#4a4a4a"></div><div style="left:806px;top:278px;width:2px;height:19px;background:#8a8a8a"></div><div style="left:54px;top:298px;width:33px;height:34px;background:#6a6a6a"></div><div style="left:87px;top:297px;width:2px;height:36px;background:#1e7145"></div><div style="left:54px;top:297px;width:33px;height:35px;overflow:hidden"><span class="h" style="right:0;width:33px;text-align:center;bottom:1px;font-size:16px;color:#e6e6e6">1</span></div><div style="left:54px;top:332px;width:33px;height:1px;background:#4a4a4a"></div><div style="left:54px;top:333px;width:33px;height:29px;overflow:hidden"><span class="h" style="right:0;width:33px;text-align:center;bottom:0px;font-size:16px;color:#e6e6e6">2</span></div><div style="left:54px;top:362px;width:33px;height:1px;background:#4a4a4a"></div><div style="left:54px;top:363px;width:33px;height:17px;overflow:hidden"><span class="h" style="right:0;width:33px;text-align:center;bottom:-1px;font-size:16px;color:#e6e6e6">3</span></div><div style="left:54px;top:380px;width:33px;height:1px;background:#4a4a4a"></div><div style="left:54px;top:384px;width:33px;height:1px;background:#4a4a4a"></div><div style="left:54px;top:385px;width:33px;height:31px;overflow:hidden"><span class="h" style="right:0;width:33px;text-align:center;bottom:13px;font-size:16px;color:#e6e6e6">5</span></div><div style="left:54px;top:416px;width:33px;height:1px;background:#4a4a4a"></div><div style="left:54px;top:417px;width:33px;height:19px;overflow:hidden"><span class="h" style="right:0;width:33px;text-align:center;bottom:0px;font-size:16px;color:#e6e6e6">6</span></div><div style="left:54px;top:436px;width:33px;height:1px;background:#4a4a4a"></div><div style="left:54px;top:437px;width:33px;height:18px;overflow:hidden"><span class="h" style="right:0;width:33px;text-align:center;bottom:0px;font-size:16px;color:#e6e6e6">7</span></div><div style="left:54px;top:455px;width:33px;height:1px;background:#4a4a4a"></div><div style="left:54px;top:457px;width:33px;height:20px;overflow:hidden"><span class="h" style="right:0;width:33px;text-align:center;bottom:1px;font-size:16px;color:#e6e6e6">13</span></div><div style="left:54px;top:477px;width:33px;height:1px;background:#4a4a4a"></div><div style="left:54px;top:478px;width:33px;height:23px;overflow:hidden"><span class="h" style="right:0;width:33px;text-align:center;bottom:2px;font-size:16px;color:#e6e6e6">14</span></div><div style="left:54px;top:501px;width:33px;height:1px;background:#4a4a4a"></div><div style="left:54px;top:502px;width:33px;height:12px;overflow:hidden"><span class="h" style="right:0;width:33px;text-align:center;bottom:1px;font-size:16px;color:#e6e6e6">15</span></div><div style="left:54px;top:514px;width:33px;height:1px;background:#4a4a4a"></div><div style="left:54px;top:515px;width:33px;height:23px;overflow:hidden"><span class="h" style="right:0;width:33px;text-align:center;bottom:3px;font-size:16px;color:#e6e6e6">16</span></div><div style="left:54px;top:538px;width:33px;height:1px;background:#4a4a4a"></div><div style="left:54px;top:539px;width:33px;height:5px;overflow:hidden"><span class="h" style="right:0;width:33px;text-align:center;bottom:1px;font-size:16px;color:#e6e6e6">17</span></div><div style="left:54px;top:544px;width:33px;height:1px;background:#4a4a4a"></div><div style="left:54px;top:547px;width:33px;height:1px;background:#4a4a4a"></div><div style="left:54px;top:548px;width:33px;height:17px;overflow:hidden"><span class="h" style="right:0;width:33px;text-align:center;bottom:1px;font-size:16px;color:#e6e6e6">19</span></div><div style="left:54px;top:565px;width:33px;height:1px;background:#4a4a4a"></div><div style="left:54px;top:567px;width:33px;height:18px;overflow:hidden"><span class="h" style="right:0;width:33px;text-align:center;bottom:1px;font-size:16px;color:#e6e6e6">22</span></div><div style="left:54px;top:585px;width:33px;height:1px;background:#4a4a4a"></div><div style="left:54px;top:586px;width:33px;height:19px;overflow:hidden"><span class="h" style="right:0;width:33px;text-align:center;bottom:1px;font-size:16px;color:#e6e6e6">23</span></div><div style="left:54px;top:605px;width:33px;height:1px;background:#4a4a4a"></div><div style="left:54px;top:606px;width:33px;height:19px;overflow:hidden"><span class="h" style="right:0;width:33px;text-align:center;bottom:1px;font-size:16px;color:#e6e6e6">24</span></div><div style="left:54px;top:625px;width:33px;height:1px;background:#4a4a4a"></div><div style="left:54px;top:626px;width:33px;height:19px;overflow:hidden"><span class="h" style="right:0;width:33px;text-align:center;bottom:1px;font-size:16px;color:#e6e6e6">25</span></div><div style="left:54px;top:645px;width:33px;height:1px;background:#4a4a4a"></div><div style="left:54px;top:646px;width:33px;height:16px;overflow:hidden"><span class="h" style="right:0;width:33px;text-align:center;bottom:1px;font-size:16px;color:#e6e6e6">26</span></div><div style="left:54px;top:662px;width:33px;height:1px;background:#4a4a4a"></div><div style="left:54px;top:663px;width:33px;height:22px;overflow:hidden"><span class="h" style="right:0;width:33px;text-align:center;bottom:2px;font-size:16px;color:#e6e6e6">27</span></div><div style="left:54px;top:685px;width:33px;height:1px;background:#4a4a4a"></div><div style="left:54px;top:689px;width:33px;height:1px;background:#4a4a4a"></div><div style="left:54px;top:690px;width:33px;height:19px;overflow:hidden"><span class="h" style="right:0;width:33px;text-align:center;bottom:2px;font-size:16px;color:#e6e6e6">29</span></div><div style="left:54px;top:709px;width:33px;height:1px;background:#4a4a4a"></div><div style="left:54px;top:713px;width:33px;height:1px;background:#4a4a4a"></div><div style="left:54px;top:714px;width:33px;height:20px;overflow:hidden"><span class="h" style="right:0;width:33px;text-align:center;bottom:2px;font-size:16px;color:#e6e6e6">31</span></div><div style="left:54px;top:734px;width:33px;height:1px;background:#4a4a4a"></div><div style="left:54px;top:735px;width:33px;height:15px;overflow:hidden"><span class="h" style="right:0;width:33px;text-align:center;bottom:1px;font-size:16px;color:#e6e6e6">32</span></div><div style="left:54px;top:750px;width:33px;height:1px;background:#4a4a4a"></div><div style="left:54px;top:751px;width:33px;height:23px;overflow:hidden"><span class="h" style="right:0;width:33px;text-align:center;bottom:3px;font-size:16px;color:#e6e6e6">33</span></div><div style="left:54px;top:774px;width:33px;height:1px;background:#4a4a4a"></div><div style="left:54px;top:777px;width:33px;height:1px;background:#4a4a4a"></div><div style="left:54px;top:778px;width:33px;height:19px;overflow:hidden"><span class="h" style="right:0;width:33px;text-align:center;bottom:1px;font-size:16px;color:#e6e6e6">35</span></div><div style="left:54px;top:797px;width:33px;height:1px;background:#4a4a4a"></div><div style="left:54px;top:798px;width:33px;height:20px;overflow:hidden"><span class="h" style="right:0;width:33px;text-align:center;bottom:2px;font-size:16px;color:#e6e6e6">36</span></div><div style="left:54px;top:818px;width:33px;height:1px;background:#4a4a4a"></div><div style="left:54px;top:819px;width:33px;height:19px;overflow:hidden"><span class="h" style="right:0;width:33px;text-align:center;bottom:3px;font-size:16px;color:#e6e6e6">37</span></div><div style="left:54px;top:838px;width:33px;height:1px;background:#4a4a4a"></div><div style="left:54px;top:839px;width:33px;height:19px;overflow:hidden"><span class="h" style="right:0;width:33px;text-align:center;bottom:2px;font-size:16px;color:#e6e6e6">38</span></div><div style="left:54px;top:858px;width:33px;height:1px;background:#4a4a4a"></div><div style="left:54px;top:859px;width:33px;height:18px;overflow:hidden"><span class="h" style="right:0;width:33px;text-align:center;bottom:1px;font-size:16px;color:#e6e6e6">39</span></div><div style="left:54px;top:877px;width:33px;height:1px;background:#4a4a4a"></div><div style="left:54px;top:878px;width:33px;height:19px;overflow:hidden"><span class="h" style="right:0;width:33px;text-align:center;bottom:1px;font-size:16px;color:#e6e6e6">40</span></div><div style="left:54px;top:897px;width:33px;height:1px;background:#4a4a4a"></div><div style="left:54px;top:898px;width:33px;height:16px;overflow:hidden"><span class="h" style="right:0;width:33px;text-align:center;bottom:1px;font-size:16px;color:#e6e6e6">41</span></div><div style="left:54px;top:914px;width:33px;height:1px;background:#4a4a4a"></div><div style="left:54px;top:915px;width:33px;height:19px;overflow:hidden"><span class="h" style="right:0;width:33px;text-align:center;bottom:1px;font-size:16px;color:#e6e6e6">42</span></div><div style="left:54px;top:934px;width:33px;height:1px;background:#4a4a4a"></div><div style="left:54px;top:935px;width:33px;height:15px;overflow:hidden"><span class="h" style="right:0;width:33px;text-align:center;bottom:1px;font-size:16px;color:#e6e6e6">43</span></div><div style="left:54px;top:950px;width:33px;height:1px;background:#4a4a4a"></div><div style="left:54px;top:951px;width:33px;height:17px;overflow:hidden"><span class="h" style="right:0;width:33px;text-align:center;bottom:1px;font-size:16px;color:#e6e6e6">44</span></div><div style="left:54px;top:968px;width:33px;height:1px;background:#4a4a4a"></div><div style="left:54px;top:969px;width:33px;height:24px;overflow:hidden"><span class="h" style="right:0;width:33px;text-align:center;bottom:0px;font-size:16px;color:#e6e6e6">45</span></div><div style="left:54px;top:993px;width:33px;height:1px;background:#4a4a4a"></div><div style="left:54px;top:994px;width:33px;height:12px;overflow:hidden"><span class="h" style="right:0;width:33px;text-align:center;bottom:1px;font-size:16px;color:#e6e6e6">46</span></div><div style="left:54px;top:1006px;width:33px;height:1px;background:#4a4a4a"></div><div style="left:54px;top:1007px;width:33px;height:22px;overflow:hidden"><span class="h" style="right:0;width:33px;text-align:center;bottom:1px;font-size:16px;color:#e6e6e6">47</span></div><div style="left:54px;top:1029px;width:33px;height:1px;background:#4a4a4a"></div><div style="left:54px;top:1030px;width:33px;height:20px;overflow:hidden"><span class="h" style="right:0;width:33px;text-align:center;bottom:0px;font-size:16px;color:#e6e6e6">48</span></div><div style="left:54px;top:1050px;width:33px;height:1px;background:#4a4a4a"></div><div style="left:54px;top:1051px;width:33px;height:20px;overflow:hidden"><span class="h" style="right:0;width:33px;text-align:center;bottom:0px;font-size:16px;color:#e6e6e6">49</span></div><div style="left:54px;top:1071px;width:33px;height:1px;background:#4a4a4a"></div><div style="left:54px;top:1072px;width:33px;height:20px;overflow:hidden"><span class="h" style="right:0;width:33px;text-align:center;bottom:1px;font-size:16px;color:#e6e6e6">50</span></div><div style="left:54px;top:1092px;width:33px;height:1px;background:#4a4a4a"></div><div style="left:54px;top:1093px;width:33px;height:21px;overflow:hidden"><span class="h" style="right:0;width:33px;text-align:center;bottom:1px;font-size:16px;color:#e6e6e6">51</span></div><div style="left:54px;top:1114px;width:33px;height:1px;background:#4a4a4a"></div><div style="left:54px;top:1115px;width:33px;height:22px;overflow:hidden"><span class="h" style="right:0;width:33px;text-align:center;bottom:1px;font-size:16px;color:#e6e6e6">52</span></div><div style="left:54px;top:1137px;width:33px;height:1px;background:#4a4a4a"></div><div style="left:54px;top:1138px;width:33px;height:20px;overflow:hidden"><span class="h" style="right:0;width:33px;text-align:center;bottom:0px;font-size:16px;color:#e6e6e6">53</span></div><div style="left:54px;top:1158px;width:33px;height:1px;background:#4a4a4a"></div><div style="left:54px;top:1159px;width:33px;height:20px;overflow:hidden"><span class="h" style="right:0;width:33px;text-align:center;bottom:0px;font-size:16px;color:#e6e6e6">54</span></div><div style="left:54px;top:1179px;width:33px;height:1px;background:#4a4a4a"></div><div style="left:54px;top:1180px;width:33px;height:22px;overflow:hidden"><span class="h" style="right:0;width:33px;text-align:center;bottom:1px;font-size:16px;color:#e6e6e6">55</span></div><div style="left:54px;top:1202px;width:33px;height:1px;background:#4a4a4a"></div><div style="left:54px;top:1203px;width:33px;height:22px;overflow:hidden"><span class="h" style="right:0;width:33px;text-align:center;bottom:1px;font-size:16px;color:#e6e6e6">56</span></div><div style="left:54px;top:1225px;width:33px;height:1px;background:#4a4a4a"></div><div style="left:54px;top:1226px;width:33px;height:19px;overflow:hidden"><span class="h" style="right:0;width:33px;text-align:center;bottom:0px;font-size:16px;color:#e6e6e6">57</span></div><div style="left:54px;top:1245px;width:33px;height:1px;background:#4a4a4a"></div><div style="left:54px;top:1246px;width:33px;height:20px;overflow:hidden"><span class="h" style="right:0;width:33px;text-align:center;bottom:1px;font-size:16px;color:#e6e6e6">58</span></div><div style="left:54px;top:1266px;width:33px;height:1px;background:#4a4a4a"></div><div style="left:54px;top:1267px;width:33px;height:20px;overflow:hidden"><span class="h" style="right:0;width:33px;text-align:center;bottom:1px;font-size:16px;color:#e6e6e6">59</span></div><div style="left:54px;top:1287px;width:33px;height:1px;background:#4a4a4a"></div><div style="left:54px;top:1288px;width:33px;height:20px;overflow:hidden"><span class="h" style="right:0;width:33px;text-align:center;bottom:1px;font-size:16px;color:#e6e6e6">60</span></div><div style="left:54px;top:1308px;width:33px;height:1px;background:#4a4a4a"></div><div style="left:54px;top:1309px;width:33px;height:22px;overflow:hidden"><span class="h" style="right:0;width:33px;text-align:center;bottom:1px;font-size:16px;color:#e6e6e6">61</span></div><div style="left:54px;top:1331px;width:33px;height:1px;background:#4a4a4a"></div><div style="left:54px;top:1332px;width:33px;height:22px;overflow:hidden"><span class="h" style="right:0;width:33px;text-align:center;bottom:1px;font-size:16px;color:#e6e6e6">62</span></div><div style="left:54px;top:1354px;width:33px;height:1px;background:#4a4a4a"></div><div style="left:54px;top:1355px;width:33px;height:22px;overflow:hidden"><span class="h" style="right:0;width:33px;text-align:center;bottom:2px;font-size:16px;color:#e6e6e6">63</span></div><div style="left:54px;top:1377px;width:33px;height:1px;background:#4a4a4a"></div><div style="left:54px;top:1378px;width:33px;height:21px;overflow:hidden"><span class="h" style="right:0;width:33px;text-align:center;bottom:1px;font-size:16px;color:#e6e6e6">64</span></div><div style="left:54px;top:1399px;width:33px;height:1px;background:#4a4a4a"></div><div style="left:54px;top:1400px;width:33px;height:20px;overflow:hidden"><span class="h" style="right:0;width:33px;text-align:center;bottom:1px;font-size:16px;color:#e6e6e6">65</span></div><div style="left:54px;top:1420px;width:33px;height:1px;background:#4a4a4a"></div><div style="left:54px;top:1421px;width:33px;height:20px;overflow:hidden"><span class="h" style="right:0;width:33px;text-align:center;bottom:1px;font-size:16px;color:#e6e6e6">66</span></div><div style="left:54px;top:1441px;width:33px;height:1px;background:#4a4a4a"></div><div style="left:54px;top:1442px;width:33px;height:16px;overflow:hidden"><span class="h" style="right:0;width:33px;text-align:center;bottom:1px;font-size:16px;color:#e6e6e6">67</span></div><div style="left:54px;top:1458px;width:33px;height:1px;background:#4a4a4a"></div><div style="left:54px;top:1459px;width:33px;height:23px;overflow:hidden"><span class="h" style="right:0;width:33px;text-align:center;bottom:0px;font-size:16px;color:#e6e6e6">68</span></div><div style="left:54px;top:1482px;width:33px;height:1px;background:#4a4a4a"></div><div style="left:54px;top:1483px;width:33px;height:12px;overflow:hidden"><span class="h" style="right:0;width:33px;text-align:center;bottom:1px;font-size:16px;color:#e6e6e6">69</span></div><div style="left:54px;top:1495px;width:33px;height:1px;background:#4a4a4a"></div><div style="left:54px;top:1496px;width:33px;height:19px;overflow:hidden"><span class="h" style="right:0;width:33px;text-align:center;bottom:0px;font-size:16px;color:#e6e6e6">70</span></div><div style="left:54px;top:1515px;width:33px;height:1px;background:#4a4a4a"></div><div style="left:54px;top:1516px;width:33px;height:19px;overflow:hidden"><span class="h" style="right:0;width:33px;text-align:center;bottom:0px;font-size:16px;color:#e6e6e6">71</span></div><div style="left:54px;top:1535px;width:33px;height:1px;background:#4a4a4a"></div><div style="left:54px;top:1536px;width:33px;height:19px;overflow:hidden"><span class="h" style="right:0;width:33px;text-align:center;bottom:0px;font-size:16px;color:#e6e6e6">72</span></div><div style="left:54px;top:1555px;width:33px;height:1px;background:#4a4a4a"></div><div style="left:54px;top:1556px;width:33px;height:19px;overflow:hidden"><span class="h" style="right:0;width:33px;text-align:center;bottom:1px;font-size:16px;color:#e6e6e6">73</span></div><div style="left:54px;top:1575px;width:33px;height:1px;background:#4a4a4a"></div><div style="left:54px;top:1576px;width:33px;height:19px;overflow:hidden"><span class="h" style="right:0;width:33px;text-align:center;bottom:0px;font-size:16px;color:#e6e6e6">74</span></div><div style="left:54px;top:1595px;width:33px;height:1px;background:#4a4a4a"></div><div style="left:54px;top:1596px;width:33px;height:19px;overflow:hidden"><span class="h" style="right:0;width:33px;text-align:center;bottom:0px;font-size:16px;color:#e6e6e6">75</span></div><div style="left:54px;top:1615px;width:33px;height:1px;background:#4a4a4a"></div><div style="left:54px;top:1616px;width:33px;height:19px;overflow:hidden"><span class="h" style="right:0;width:33px;text-align:center;bottom:1px;font-size:16px;color:#e6e6e6">76</span></div><div style="left:54px;top:1635px;width:33px;height:1px;background:#4a4a4a"></div><div style="left:54px;top:1636px;width:33px;height:20px;overflow:hidden"><span class="h" style="right:0;width:33px;text-align:center;bottom:1px;font-size:16px;color:#e6e6e6">77</span></div><div style="left:54px;top:1656px;width:33px;height:1px;background:#4a4a4a"></div><div style="left:54px;top:1657px;width:33px;height:13px;overflow:hidden"><span class="h" style="right:0;width:33px;text-align:center;bottom:-1px;font-size:16px;color:#e6e6e6">78</span></div><div style="left:54px;top:565px;width:33px;height:1px;background:#4a4a4a"></div><div style="left:54px;top:566px;width:33px;height:1px;background:#4a4a4a"></div><div style="left:14px;top:547px;width:18px;height:17.5px;background:#e4e4e4;border:1px solid #f6f6f6;border-right-color:#8c8c8c;border-bottom-color:#8c8c8c"></div><svg style="left:14px;top:547px;" width="18" height="18" viewBox="0 0 18 18"><path d="M5 9h8M9 5v8" stroke="#5e5e5e" stroke-width="1.800" fill="none"/></svg><div style="left:14px;top:567px;width:18px;height:17.5px;background:#e4e4e4;border:1px solid #f6f6f6;border-right-color:#8c8c8c;border-bottom-color:#8c8c8c"></div><svg style="left:14px;top:567px;" width="18" height="18" viewBox="0 0 18 18"><path d="M5 9h8M9 5v8" stroke="#5e5e5e" stroke-width="1.800" fill="none"/></svg><div style="left:11px;top:456px;width:2849px;height:1px;background:#9c9c9c"></div><div style="left:807px;top:297px;width:1px;height:1373px;background:#9c9c9c"></div><span class="h" style="left:114.6px;top:303.0px;font-size:28px;color:#1f2329;font-weight:bold;letter-spacing:-0.11px;">Cash Flow Statement</span><span class="h" style="left:113.0px;top:336.0px;font-size:24px;color:#000;font-weight:bold;letter-spacing:0.06px;">ABC Company Inc.</span><span class="h" style="left:112.5px;top:364.0px;font-size:16px;color:#3b78e0;font-weight:bold;letter-spacing:0.21px;text-decoration:underline;text-decoration-thickness:1.5px;text-underline-offset:2px;">Go to Table of Contents</span><span class="h" style="left:112.6px;top:421.0px;font-size:16px;color:#000;font-weight:bold;">Fiscal year</span><div class="nr nb" style="top:421px;color:#000"><span>2026</span><span>2026</span><span>2026</span><span>2026</span><span>2026</span><span>2026</span><span>2026</span><span>2026</span><span>2026</span><span>2026</span><span>2026</span><span>2026</span><span>2027</span><span>2027</span><span>2027</span><span>2027</span><span>2027</span></div><span class="h" style="left:112.6px;top:440.0px;font-size:16px;color:#000;font-weight:bold;">Month</span><div class="nr nb" style="top:440px;color:#000"><span>Jan-26</span><span>Feb-26</span><span>Mar-26</span><span>Apr-26</span><span>May-26</span><span>Jun-26</span><span>Jul-26</span><span>Aug-26</span><span>Sep-26</span><span>Oct-26</span><span>Nov-26</span><span>Dec-26</span><span>Jan-27</span><span>Feb-27</span><span>Mar-27</span><span>Apr-27</span><span>May-27</span></div><span class="h" style="left:113.6px;top:480.0px;font-size:19.7px;color:#1d1d1f;font-weight:bold;letter-spacing:0.03px;">Cash Flow Statement, $</span><span class="h" style="left:125.8px;top:519.0px;font-size:17.4px;color:#1d1d1f;font-weight:bold;letter-spacing:0.07px;">Cash Flow from Operating Activities</span><span class="h" style="left:139.0px;top:549.0px;font-size:16px;color:#1d1d1f;letter-spacing:-0.31px;">Cash Receipts</span><div class="nr n14" style="top:549px"><span class="p">2,552</span><span class="p">5,236</span><span class="p">7,053</span><span class="p">7,779</span><span class="p">9,234</span><span class="p">10,103</span><span class="p">11,351</span><span class="p">11,809</span><span class="p">12,235</span><span class="p">13,279</span><span class="p">13,479</span><span class="p">14,563</span><span class="p">22,018</span><span class="p">28,994</span><span class="p">35,707</span><span class="p">36,767</span><span class="p">41,389</span></div><span class="h" style="left:139.0px;top:569.0px;font-size:16px;color:#1d1d1f;letter-spacing:-0.26px;">Cash Payments</span><div class="nr n14" style="top:569px"><span>(26,142)</span><span>(47,897)</span><span>(53,232)</span><span>(49,948)</span><span>(51,701)</span><span>(50,205)</span><span>(51,918)</span><span>(51,174)</span><span>(50,427)</span><span>(52,128)</span><span>(50,565)</span><span>(52,269)</span><span>(72,970)</span><span>(88,019)</span><span>(97,825)</span><span>(91,970)</span><span>(95,273)</span></div><span class="h" style="left:139.0px;top:588.0px;font-size:16px;color:#1d1d1f;letter-spacing:-0.22px;">Interest Expense</span><div class="nr n14" style="top:589px"><span>(1,000)</span><span>(1,000)</span><span>(1,667)</span><span>(1,656)</span><span>(1,644)</span><span>(1,633)</span><span>(1,622)</span><span>(1,611)</span><span>(1,600)</span><span>(1,589)</span><span>(1,578)</span><span>(1,567)</span><span>(1,556)</span><span>(1,534)</span><span>(1,512)</span><span>(1,491)</span><span>(1,469)</span></div><span class="h" style="left:139.0px;top:608.0px;font-size:16px;color:#1d1d1f;letter-spacing:-0.07px;">Corporate Tax Expense</span><div class="nr n14" style="top:609px"><span class="d">-</span><span class="d">-</span><span class="d">-</span><span class="d">-</span><span class="d">-</span><span class="d">-</span><span class="d">-</span><span class="d">-</span><span class="d">-</span><span class="d">-</span><span class="d">-</span><span class="d">-</span><span class="d">-</span><span class="d">-</span><span class="d">-</span><span class="d">-</span><span class="d">-</span></div><div style="left:135px;top:625px;width:2725px;height:20px;background:#4ab2e6"></div><span class="h" style="left:145.3px;top:629.0px;font-size:16px;color:#fff;font-weight:bold;letter-spacing:0.02px;">Net Cash Flow from Operating Activities</span><div class="nr nb nw" style="top:629px"><span>(24,590)</span><span>(43,660)</span><span>(47,846)</span><span>(43,824)</span><span>(44,112)</span><span>(41,735)</span><span>(42,189)</span><span>(40,976)</span><span>(39,792)</span><span>(40,439)</span><span>(38,664)</span><span>(39,272)</span><span>(52,507)</span><span>(60,559)</span><span>(63,630)</span><span>(56,694)</span><span>(55,353)</span></div><span class="h" style="left:125.8px;top:666.0px;font-size:17.4px;color:#1d1d1f;font-weight:bold;letter-spacing:0.13px;">Cash Flow from Investing Activities</span><span class="h" style="left:139.0px;top:692.0px;font-size:16px;color:#1d1d1f;letter-spacing:-0.24px;">Capital Expenditure</span><div class="nr n14" style="top:692px"><span>(35,000)</span><span>(37,500)</span><span>(42,500)</span><span>(35,000)</span><span>(29,000)</span><span>(29,000)</span><span>(3,500)</span><span>(3,500)</span><span>(6,000)</span><span>(6,000)</span><span class="d">-</span><span class="d">-</span><span class="d">-</span><span class="d">-</span><span class="d">-</span><span class="d">-</span><span class="d">-</span></div><div style="left:135px;top:714px;width:2725px;height:20px;background:#4ab2e6"></div><span class="h" style="left:145.3px;top:717.0px;font-size:16px;color:#fff;font-weight:bold;letter-spacing:0.03px;">Net Cash Flow from Investing Activities</span><div class="nr nb nw" style="top:717px"><span>(35,000)</span><span>(37,500)</span><span>(42,500)</span><span>(35,000)</span><span>(29,000)</span><span>(29,000)</span><span>(3,500)</span><span>(3,500)</span><span>(6,000)</span><span>(6,000)</span><span class="d">-</span><span class="d">-</span><span class="d">-</span><span class="d">-</span><span class="d">-</span><span class="d">-</span><span class="d">-</span></div><span class="h" style="left:125.8px;top:754.0px;font-size:17.4px;color:#1d1d1f;font-weight:bold;letter-spacing:0.08px;">Cash Flow from Financing Activities</span><span class="h" style="left:139.0px;top:780.0px;font-size:16px;color:#1d1d1f;letter-spacing:-0.15px;">Debts Drawdowns</span><div class="nr n14" style="top:781px"><span class="p">200,000</span><span class="d">-</span><span class="p">100,000</span><span class="d">-</span><span class="d">-</span><span class="d">-</span><span class="d">-</span><span class="d">-</span><span class="d">-</span><span class="d">-</span><span class="d">-</span><span class="d">-</span><span class="d">-</span><span class="d">-</span><span class="d">-</span><span class="d">-</span><span class="d">-</span></div><span class="h" style="left:139.0px;top:800.0px;font-size:16px;color:#1d1d1f;letter-spacing:-0.33px;">Debts Repayments</span><div class="nr n14" style="top:801px"><span class="d">-</span><span class="d">-</span><span>(1,667)</span><span>(1,667)</span><span>(1,667)</span><span>(1,667)</span><span>(1,667)</span><span>(1,667)</span><span>(1,667)</span><span>(1,667)</span><span>(1,667)</span><span>(1,667)</span><span>(3,770)</span><span>(3,780)</span><span>(3,791)</span><span>(3,801)</span><span>(3,812)</span></div><span class="h" style="left:139.0px;top:820.0px;font-size:16px;color:#1d1d1f;letter-spacing:-0.16px;">Equity Raisings</span><div class="nr n14" style="top:820px"><span class="p">700,000</span><span class="d">-</span><span class="d">-</span><span class="d">-</span><span class="d">-</span><span class="d">-</span><span class="d">-</span><span class="d">-</span><span class="d">-</span><span class="d">-</span><span class="d">-</span><span class="d">-</span><span class="d">-</span><span class="d">-</span><span class="d">-</span><span class="d">-</span><span class="d">-</span></div><span class="h" style="left:139.0px;top:840.0px;font-size:16px;color:#1d1d1f;letter-spacing:-0.32px;">Equity Buybacks</span><div class="nr n14" style="top:841px"><span class="d">-</span><span class="d">-</span><span class="d">-</span><span class="d">-</span><span class="d">-</span><span class="d">-</span><span class="d">-</span><span class="d">-</span><span class="d">-</span><span class="d">-</span><span class="d">-</span><span class="d">-</span><span class="d">-</span><span class="d">-</span><span class="d">-</span><span class="d">-</span><span class="d">-</span></div><span class="h" style="left:139.0px;top:860.0px;font-size:16px;color:#1d1d1f;letter-spacing:-0.08px;">Dividends Paid</span><div class="nr n14" style="top:861px"><span class="d">-</span><span class="d">-</span><span class="d">-</span><span class="d">-</span><span class="d">-</span><span class="d">-</span><span class="d">-</span><span class="d">-</span><span class="d">-</span><span class="d">-</span><span class="d">-</span><span class="d">-</span><span class="d">-</span><span class="d">-</span><span class="d">-</span><span class="d">-</span><span class="d">-</span></div><div style="left:135px;top:877px;width:2725px;height:20px;background:#4ab2e6"></div><span class="h" style="left:145.3px;top:881.0px;font-size:16px;color:#fff;font-weight:bold;letter-spacing:-0.02px;">Net Cash Flow from Financing Activities</span><div class="nr nb nw" style="top:881px"><span class="p">900,000</span><span class="d">-</span><span class="p">98,333</span><span>(1,667)</span><span>(1,667)</span><span>(1,667)</span><span>(1,667)</span><span>(1,667)</span><span>(1,667)</span><span>(1,667)</span><span>(1,667)</span><span>(1,667)</span><span>(3,770)</span><span>(3,780)</span><span>(3,791)</span><span>(3,801)</span><span>(3,812)</span></div><div style="left:135px;top:914px;width:2725px;height:20px;background:#4ab2e6"></div><span class="h" style="left:145.3px;top:918.0px;font-size:16px;color:#fff;font-weight:bold;letter-spacing:0.16px;">Net Increase/(Decrease) in Cash Held</span><div class="nr nb nw" style="top:918px"><span class="p">840,410</span><span>(81,160)</span><span class="p">7,987</span><span>(80,491)</span><span>(74,778)</span><span>(72,402)</span><span>(47,356)</span><span>(46,143)</span><span>(47,459)</span><span>(48,105)</span><span>(40,330)</span><span>(40,939)</span><span>(56,276)</span><span>(64,339)</span><span>(67,421)</span><span>(60,495)</span><span>(59,165)</span></div><span class="h" style="left:113.6px;top:973.0px;font-size:19.7px;color:#1d1d1f;font-weight:bold;letter-spacing:0.1px;">Cash Flow Statement (indirect method), $</span><span class="h" style="left:125.8px;top:1010.0px;font-size:17.4px;color:#1d1d1f;font-weight:bold;">Operating Activities</span><span class="h" style="left:139.0px;top:1033.0px;font-size:16px;color:#1d1d1f;letter-spacing:-0.19px;">Net Income Less Depreciation</span><div class="nr n16" style="top:1033px"><span>(46,458)</span><span>(45,407)</span><span>(45,022)</span><span>(43,960)</span><span>(42,897)</span><span>(41,835)</span><span>(41,261)</span><span>(40,688)</span><span>(40,114)</span><span>(39,540)</span><span>(38,966)</span><span>(38,392)</span><span>(65,107)</span><span>(62,071)</span><span>(59,036)</span><span>(56,000)</span><span>(52,965)</span></div><span class="h" style="left:139.0px;top:1054.0px;font-size:16px;color:#1d1d1f;letter-spacing:-0.14px;">Changes in Working Capital</span><div class="nr n16" style="top:1054px"><span class="p">21,868</span><span class="p">1,746</span><span>(2,824)</span><span class="p">136</span><span>(1,214)</span><span class="p">100</span><span>(928)</span><span>(289)</span><span class="p">322</span><span>(899)</span><span class="p">302</span><span>(880)</span><span class="p">12,600</span><span class="p">1,513</span><span>(4,594)</span><span>(693)</span><span>(2,388)</span></div><div style="left:122px;top:1071px;width:2738px;height:21px;background:#4ab2e6"></div><span class="h" style="left:133.9px;top:1075.0px;font-size:16px;color:#fff;font-weight:bold;letter-spacing:0.12px;">Total Operating Activities</span><div class="nr nb nw" style="top:1075px"><span>(24,590)</span><span>(43,660)</span><span>(47,846)</span><span>(43,824)</span><span>(44,112)</span><span>(41,735)</span><span>(42,189)</span><span>(40,976)</span><span>(39,792)</span><span>(40,439)</span><span>(38,664)</span><span>(39,272)</span><span>(52,507)</span><span>(60,559)</span><span>(63,630)</span><span>(56,694)</span><span>(55,353)</span></div><span class="h" style="left:125.8px;top:1118.0px;font-size:17.4px;color:#1d1d1f;font-weight:bold;letter-spacing:0.11px;">Investing Activities</span><span class="h" style="left:139.0px;top:1141.0px;font-size:16px;color:#1d1d1f;letter-spacing:-0.24px;">Capital Expenditure</span><div class="nr n16" style="top:1141px"><span>(35,000)</span><span>(37,500)</span><span>(42,500)</span><span>(35,000)</span><span>(29,000)</span><span>(29,000)</span><span>(3,500)</span><span>(3,500)</span><span>(6,000)</span><span>(6,000)</span><span class="d">-</span><span class="d">-</span><span class="d">-</span><span class="d">-</span><span class="d">-</span><span class="d">-</span><span class="d">-</span></div><div style="left:122px;top:1158px;width:2738px;height:21px;background:#4ab2e6"></div><span class="h" style="left:133.9px;top:1162.0px;font-size:16px;color:#fff;font-weight:bold;letter-spacing:0.12px;">Total Cash From (For) Investing Activities</span><div class="nr nb nw" style="top:1162px"><span>(35,000)</span><span>(37,500)</span><span>(42,500)</span><span>(35,000)</span><span>(29,000)</span><span>(29,000)</span><span>(3,500)</span><span>(3,500)</span><span>(6,000)</span><span>(6,000)</span><span class="d">-</span><span class="d">-</span><span class="d">-</span><span class="d">-</span><span class="d">-</span><span class="d">-</span><span class="d">-</span></div><span class="h" style="left:125.8px;top:1206.0px;font-size:17.4px;color:#1d1d1f;font-weight:bold;letter-spacing:0.02px;">Financing Activities</span><span class="h" style="left:139.0px;top:1228.0px;font-size:16px;color:#1d1d1f;letter-spacing:-0.15px;">Equity Investment</span><div class="nr n16" style="top:1228px"><span class="p">700,000</span><span class="d">-</span><span class="d">-</span><span class="d">-</span><span class="d">-</span><span class="d">-</span><span class="d">-</span><span class="d">-</span><span class="d">-</span><span class="d">-</span><span class="d">-</span><span class="d">-</span><span class="d">-</span><span class="d">-</span><span class="d">-</span><span class="d">-</span><span class="d">-</span></div><span class="h" style="left:139.0px;top:1248.0px;font-size:16px;color:#1d1d1f;letter-spacing:-0.1px;">Loans</span><div class="nr n16" style="top:1248px"><span class="p">200,000</span><span class="d">-</span><span class="p">98,333</span><span>(1,667)</span><span>(1,667)</span><span>(1,667)</span><span>(1,667)</span><span>(1,667)</span><span>(1,667)</span><span>(1,667)</span><span>(1,667)</span><span>(1,667)</span><span>(3,770)</span><span>(3,780)</span><span>(3,791)</span><span>(3,801)</span><span>(3,812)</span></div><span class="h" style="left:139.0px;top:1269.0px;font-size:16px;color:#1d1d1f;letter-spacing:-0.08px;">Dividends Paid</span><div class="nr n16" style="top:1269px"><span class="d">-</span><span class="d">-</span><span class="d">-</span><span class="d">-</span><span class="d">-</span><span class="d">-</span><span class="d">-</span><span class="d">-</span><span class="d">-</span><span class="d">-</span><span class="d">-</span><span class="d">-</span><span class="d">-</span><span class="d">-</span><span class="d">-</span><span class="d">-</span><span class="d">-</span></div><div style="left:122px;top:1287px;width:2738px;height:21px;background:#4ab2e6"></div><span class="h" style="left:133.9px;top:1290.0px;font-size:16px;color:#fff;font-weight:bold;letter-spacing:0.06px;">Total Cash From (For) Financing Activities</span><div class="nr nb nw" style="top:1290px"><span class="p">900,000</span><span class="d">-</span><span class="p">98,333</span><span>(1,667)</span><span>(1,667)</span><span>(1,667)</span><span>(1,667)</span><span>(1,667)</span><span>(1,667)</span><span>(1,667)</span><span>(1,667)</span><span>(1,667)</span><span>(3,770)</span><span>(3,780)</span><span>(3,791)</span><span>(3,801)</span><span>(3,812)</span></div><span class="h" style="left:125.8px;top:1335.0px;font-size:17.4px;color:#1d1d1f;font-weight:bold;letter-spacing:0.31px;">Cash Movement</span><span class="h" style="left:139.0px;top:1358.0px;font-size:16px;color:#1d1d1f;letter-spacing:-0.24px;">Cash and Cash Equivalents Beginning</span><div class="nr n16" style="top:1358px"><span class="d">-</span><span class="p">840,410</span><span class="p">759,250</span><span class="p">767,237</span><span class="p">686,746</span><span class="p">611,968</span><span class="p">539,566</span><span class="p">492,210</span><span class="p">446,068</span><span class="p">398,609</span><span class="p">350,503</span><span class="p">310,173</span><span class="p">269,234</span><span class="p">212,958</span><span class="p">148,619</span><span class="p">81,198</span><span class="p">20,703</span></div><span class="h" style="left:139.0px;top:1381.0px;font-size:16px;color:#1d1d1f;letter-spacing:-0.16px;">Net (Increase) Decrease In Cash</span><div class="nr n16" style="top:1381px"><span class="p">840,410</span><span>(81,160)</span><span class="p">7,987</span><span>(80,491)</span><span>(74,778)</span><span>(72,402)</span><span>(47,356)</span><span>(46,143)</span><span>(47,459)</span><span>(48,105)</span><span>(40,330)</span><span>(40,939)</span><span>(56,276)</span><span>(64,339)</span><span>(67,421)</span><span>(60,495)</span><span>(59,165)</span></div><div style="left:122px;top:1399px;width:2738px;height:21px;background:#4ab2e6"></div><span class="h" style="left:133.9px;top:1402.0px;font-size:16px;color:#fff;font-weight:bold;letter-spacing:0.03px;">Total Cash and Cash Equivalents End</span><div class="nr nb nw" style="top:1402px"><span class="p">840,410</span><span class="p">759,250</span><span class="p">767,237</span><span class="p">686,746</span><span class="p">611,968</span><span class="p">539,566</span><span class="p">492,210</span><span class="p">446,068</span><span class="p">398,609</span><span class="p">350,503</span><span class="p">310,173</span><span class="p">269,234</span><span class="p">212,958</span><span class="p">148,619</span><span class="p">81,198</span><span class="p">20,703</span><span>(38,461)</span></div><span class="h" style="left:790.0px;top:1402.0px;font-size:16px;color:#fff;font-weight:bold;">-</span><span class="h" style="left:126.0px;top:1461.0px;font-size:20px;color:#1d1d1f;font-weight:bold;letter-spacing:0.09px;">Interest on Cash Breakdown</span><span class="h" style="left:139.0px;top:1499.0px;font-size:16px;color:#1d1d1f;letter-spacing:-0.08px;">Net Cash Flow from Investing Activities</span><div class="nr n14" style="top:1499px"><span>(35,000)</span><span>(37,500)</span><span>(42,500)</span><span>(35,000)</span><span>(29,000)</span><span>(29,000)</span><span>(3,500)</span><span>(3,500)</span><span>(6,000)</span><span>(6,000)</span><span class="d">-</span><span class="d">-</span><span class="d">-</span><span class="d">-</span><span class="d">-</span><span class="d">-</span><span class="d">-</span></div><span class="h" style="left:139.0px;top:1519.0px;font-size:16px;color:#1d1d1f;letter-spacing:-0.09px;">Net Cash Flow from Financing Activities</span><div class="nr n14" style="top:1519px"><span class="p">900,000</span><span class="d">-</span><span class="p">98,333</span><span>(1,667)</span><span>(1,667)</span><span>(1,667)</span><span>(1,667)</span><span>(1,667)</span><span>(1,667)</span><span>(1,667)</span><span>(1,667)</span><span>(1,667)</span><span>(3,770)</span><span>(3,780)</span><span>(3,791)</span><span>(3,801)</span><span>(3,812)</span></div><span class="h" style="left:139.0px;top:1539.0px;font-size:16px;color:#1d1d1f;letter-spacing:-0.31px;">Cash Receipts</span><div class="nr n14" style="top:1539px"><span class="p">2,552</span><span class="p">5,236</span><span class="p">7,053</span><span class="p">7,779</span><span class="p">9,234</span><span class="p">10,103</span><span class="p">11,351</span><span class="p">11,809</span><span class="p">12,235</span><span class="p">13,279</span><span class="p">13,479</span><span class="p">14,563</span><span class="p">22,018</span><span class="p">28,994</span><span class="p">35,707</span><span class="p">36,767</span><span class="p">41,389</span></div><span class="h" style="left:139.0px;top:1559.0px;font-size:16px;color:#1d1d1f;letter-spacing:-0.26px;">Cash Payments</span><div class="nr n14" style="top:1559px"><span>(26,142)</span><span>(47,897)</span><span>(53,232)</span><span>(49,948)</span><span>(51,701)</span><span>(50,205)</span><span>(51,918)</span><span>(51,174)</span><span>(50,427)</span><span>(52,128)</span><span>(50,565)</span><span>(52,269)</span><span>(72,970)</span><span>(88,019)</span><span>(97,825)</span><span>(91,970)</span><span>(95,273)</span></div><span class="h" style="left:139.0px;top:1579.0px;font-size:16px;color:#1d1d1f;">Change in Cash (Pre-Corporate Tax &amp; Interest on Cash)</span><div class="nr n14" style="top:1579px"><span class="p">841,410</span><span>(80,160)</span><span class="p">9,654</span><span>(78,835)</span><span>(73,134)</span><span>(70,769)</span><span>(45,733)</span><span>(44,532)</span><span>(45,859)</span><span>(46,517)</span><span>(38,753)</span><span>(39,372)</span><span>(54,721)</span><span>(62,805)</span><span>(65,909)</span><span>(59,005)</span><span>(57,696)</span></div><span class="h" style="left:139.0px;top:1599.0px;font-size:16px;color:#1d1d1f;letter-spacing:-0.22px;">Interest Expense</span><div class="nr n14" style="top:1599px"><span>(1,000)</span><span>(1,000)</span><span>(1,667)</span><span>(1,656)</span><span>(1,644)</span><span>(1,633)</span><span>(1,622)</span><span>(1,611)</span><span>(1,600)</span><span>(1,589)</span><span>(1,578)</span><span>(1,567)</span><span>(1,556)</span><span>(1,534)</span><span>(1,512)</span><span>(1,491)</span><span>(1,469)</span></div><span class="h" style="left:139.0px;top:1619.0px;font-size:16px;color:#1d1d1f;letter-spacing:-0.07px;">Corporate Tax Expense</span><div class="nr n14" style="top:1619px"><span class="d">-</span><span class="d">-</span><span class="d">-</span><span class="d">-</span><span class="d">-</span><span class="d">-</span><span class="d">-</span><span class="d">-</span><span class="d">-</span><span class="d">-</span><span class="d">-</span><span class="d">-</span><span class="d">-</span><span class="d">-</span><span class="d">-</span><span class="d">-</span><span class="d">-</span></div><div style="left:135px;top:1636px;width:2725px;height:20px;background:#4ab2e6"></div><span class="h" style="left:145.3px;top:1639.0px;font-size:16px;color:#fff;font-weight:bold;letter-spacing:0.16px;">Net Increase/(Decrease) in Cash Held</span><div class="nr nb nw" style="top:1639px"><span class="p">840,410</span><span>(81,160)</span><span class="p">7,987</span><span>(80,491)</span><span>(74,778)</span><span>(72,402)</span><span>(47,356)</span><span>(46,143)</span><span>(47,459)</span><span>(48,105)</span><span>(40,330)</span><span>(40,939)</span><span>(56,276)</span><span>(64,339)</span><span>(67,421)</span><span>(60,495)</span><span>(59,165)</span></div><div style="left:807px;top:297px;width:1px;height:1373px;background:#9c9c9c"></div><div style="left:2860px;top:278px;width:31px;height:1392px;background:#0a0a0a"></div><div style="left:2862px;top:279px;width:27px;height:1395px;background:#171717;border-radius:13px"></div><svg style="left:2869px;top:285px;" width="14" height="12" viewBox="0 0 14 12"><polygon points="7,1.5 13,10.5 1,10.5" fill="#9a9a9a" stroke="#9a9a9a" stroke-width="1.5" stroke-linejoin="round"/></svg><div style="left:2870px;top:304px;width:12px;height:1016px;background:#9e9e9e;border-radius:6px"></div><svg style="left:2869px;top:1653px;" width="14" height="12" viewBox="0 0 14 12"><polygon points="1,1.5 13,1.5 7,10.5" fill="#9a9a9a" stroke="#9a9a9a" stroke-width="1.5" stroke-linejoin="round"/></svg><div style="left:11px;top:1670px;width:2880px;height:48px;background:#0c0c0c"></div><div style="left:11px;top:1718px;width:2880px;height:1px;background:#333333"></div><div style="left:11px;top:1719px;width:2880px;height:32px;background:#141414"></div><div style="left:0px;top:1751px;width:2902px;height:11px;background:#000"></div><div style="left:2891px;top:0px;width:11px;height:1762px;background:#000"></div><svg style="left:44px;top:1683px;" width="13" height="19" viewBox="0 0 13 19"><polyline points="10.500,2 2.500,9.500 10.500,17" fill="none" stroke="#7c7c7c" stroke-width="1.700" stroke-linecap="round" stroke-linejoin="round"/></svg><svg style="left:93px;top:1683px;" width="13" height="19" viewBox="0 0 13 19"><polyline points="2.500,2 10.500,9.500 2.500,17" fill="none" stroke="#c4c4c4" stroke-width="1.700" stroke-linecap="round" stroke-linejoin="round"/></svg><span class="u" style="left:190.0px;top:1686.0px;font-size:21.3px;color:#fff;letter-spacing:-0.28px;">Contents</span><div style="left:292px;top:1680px;width:1px;height:28px;background:#4a4a4a"></div><div style="left:434px;top:1680px;width:1px;height:28px;background:#4a4a4a"></div><div style="left:552px;top:1680px;width:1px;height:28px;background:#4a4a4a"></div><div style="left:722px;top:1680px;width:1px;height:28px;background:#4a4a4a"></div><div style="left:825px;top:1680px;width:1px;height:28px;background:#4a4a4a"></div><div style="left:925px;top:1680px;width:1px;height:28px;background:#4a4a4a"></div><div style="left:1051px;top:1680px;width:1px;height:28px;background:#4a4a4a"></div><div style="left:1154px;top:1680px;width:1px;height:28px;background:#4a4a4a"></div><div style="left:1209px;top:1680px;width:1px;height:28px;background:#4a4a4a"></div><div style="left:1270px;top:1680px;width:1px;height:28px;background:#4a4a4a"></div><div style="left:1331px;top:1680px;width:1px;height:28px;background:#4a4a4a"></div><div style="left:1459px;top:1680px;width:1px;height:28px;background:#4a4a4a"></div><div style="left:1587px;top:1680px;width:1px;height:28px;background:#4a4a4a"></div><div style="left:1714px;top:1680px;width:1px;height:28px;background:#4a4a4a"></div><div style="left:1775px;top:1680px;width:1px;height:28px;background:#4a4a4a"></div><div style="left:1860px;top:1680px;width:1px;height:28px;background:#4a4a4a"></div><div style="left:1958px;top:1680px;width:1px;height:28px;background:#4a4a4a"></div><div style="left:2035px;top:1680px;width:1px;height:28px;background:#4a4a4a"></div><div style="left:299px;top:1676px;width:128px;height:36px;background:#ffee6b;border-radius:7px"></div><span class="u" style="left:313.5px;top:1686.0px;font-size:21.3px;color:#101418;letter-spacing:-0.41px;">Dashboard</span><div style="left:440px;top:1676px;width:106px;height:36px;background:#ffee6b;border-radius:7px"></div><span class="u" style="left:454.5px;top:1686.0px;font-size:21.3px;color:#101418;letter-spacing:-0.96px;">Revenue</span><div style="left:559px;top:1676px;width:158px;height:36px;background:#ffee6b;border-radius:7px"></div><span class="u" style="left:571.5px;top:1686.0px;font-size:21.3px;color:#101418;letter-spacing:-1.22px;">COGS &amp; OPEX</span><div style="left:730px;top:1676px;width:89px;height:36px;background:#ffee6b;border-radius:7px"></div><span class="u" style="left:743.5px;top:1686.0px;font-size:21.3px;color:#101418;letter-spacing:-0.37px;">Payroll</span><div style="left:832px;top:1676px;width:87px;height:36px;background:#ffee6b;border-radius:7px"></div><span class="u" style="left:844.5px;top:1686.0px;font-size:21.3px;color:#101418;letter-spacing:-1.94px;">CAPEX</span><div style="left:932px;top:1676px;width:113px;height:36px;background:#ffee6b;border-radius:7px"></div><span class="u" style="left:944.5px;top:1686.0px;font-size:21.3px;color:#101418;letter-spacing:-0.31px;">CapTable</span><div style="left:1058px;top:1676px;width:90px;height:36px;background:#ffee6b;border-radius:7px"></div><span class="u" style="left:1070.5px;top:1686.0px;font-size:21.3px;color:#101418;letter-spacing:-0.11px;">Capital</span><div style="left:1161px;top:1676px;width:42px;height:36px;background:#4ab3ea;border-radius:7px"></div><span class="u" style="left:1173.5px;top:1686.0px;font-size:21.3px;color:#101418;letter-spacing:-1.31px;">IS</span><div style="left:1216px;top:1670px;width:48px;height:42px;background:linear-gradient(#ffffff 0%,#ffffff 35%,#d3e6f5 100%);border-radius:0 0 6px 6px"></div><svg style="left:1209px;top:1670px;" width="7" height="7" viewBox="0 0 7 7"><path d="M0 0h7v7a7 7 0 0 0-7-7z" fill="#fff"/></svg><svg style="left:1264px;top:1670px;" width="7" height="7" viewBox="0 0 7 7"><path d="M7 0H0v7a7 7 0 0 1 7-7z" fill="#fff"/></svg><span class="u" style="left:1227.5px;top:1681.0px;font-size:21.3px;color:#1a1a1a;letter-spacing:-1.95px;">CF</span><div style="left:1228px;top:1705px;width:24px;height:3px;background:#1e8449"></div><div style="left:1277px;top:1676px;width:48px;height:36px;background:#4ab3ea;border-radius:7px"></div><span class="u" style="left:1290.5px;top:1686.0px;font-size:21.3px;color:#101418;letter-spacing:-2.96px;">BS</span><div style="left:1338px;top:1676px;width:115px;height:36px;background:#4ab3ea;border-radius:7px"></div><span class="u" style="left:1350.5px;top:1686.0px;font-size:21.3px;color:#101418;letter-spacing:-0.69px;">Scenarios</span><div style="left:1466px;top:1676px;width:115px;height:36px;background:#4ab3ea;border-radius:7px"></div><span class="u" style="left:1478.5px;top:1686.0px;font-size:21.3px;color:#101418;letter-spacing:0.14px;">Valuation</span><div style="left:1594px;top:1676px;width:114px;height:36px;background:#4ab3ea;border-radius:7px"></div><span class="u" style="left:1607.5px;top:1686.0px;font-size:21.3px;color:#101418;letter-spacing:-0.38px;">Summary</span><div style="left:1721px;top:1676px;width:48px;height:36px;background:#4ab3ea;border-radius:7px"></div><span class="u" style="left:1734.5px;top:1686.0px;font-size:21.3px;color:#101418;letter-spacing:-2.96px;">BE</span><div style="left:1782px;top:1676px;width:72px;height:36px;background:#4ab3ea;border-radius:7px"></div><span class="u" style="left:1795.5px;top:1686.0px;font-size:21.3px;color:#101418;letter-spacing:-1.69px;">ROIC</span><div style="left:1867px;top:1676px;width:85px;height:36px;background:#4ab3ea;border-radius:7px"></div><span class="u" style="left:1879.5px;top:1686.0px;font-size:21.3px;color:#101418;letter-spacing:-0.54px;">Charts</span><div style="left:1965px;top:1676px;width:64px;height:36px;background:#4ab3ea;border-radius:7px"></div><span class="u" style="left:1978.5px;top:1686.0px;font-size:21.3px;color:#101418;letter-spacing:-1.62px;">KPIs</span><div style="left:2042px;top:1676px;width:30px;height:36px;background:#4ab3ea;border-radius:7px 0 0 7px"></div><div style="left:2042px;top:1676px;width:30px;height:36px;overflow:hidden"><span class="u" style="left:12.0px;top:10.0px;font-size:21.3px;color:#101418;">Scenarios</span></div><svg style="left:2086px;top:1688px;" width="20" height="8" viewBox="0 0 20 8"><circle cx="3.500" cy="4" r="2.300" fill="#e0e0e0"/><circle cx="9.800" cy="4" r="2.300" fill="#e0e0e0"/><circle cx="16.100" cy="4" r="2.300" fill="#e0e0e0"/></svg><svg style="left:2134px;top:1683px;" width="20" height="20" viewBox="0 0 20 20"><path d="M10 1.500v17M1.500 10h17" stroke="#e6e6e6" stroke-width="1.700" stroke-linecap="round"/></svg><svg style="left:2188px;top:1686px;" width="8" height="18" viewBox="0 0 8 18"><rect x="2" y="1" width="3.600" height="3.600" fill="#e0e0e0"/><rect x="2" y="7.200" width="3.600" height="3.600" fill="#e0e0e0"/><rect x="2" y="13.400" width="3.600" height="3.600" fill="#e0e0e0"/></svg><div style="left:2216px;top:1680px;width:645px;height:26px;background:#1b1b1b;border-radius:13px"></div><svg style="left:2223px;top:1685px;" width="13" height="16" viewBox="0 0 13 16"><polygon points="11,2 11,14 2,8" fill="#9a9a9a" stroke="#9a9a9a" stroke-width="1.500" stroke-linejoin="round"/></svg><div style="left:2242px;top:1687px;width:158px;height:12px;background:#9e9e9e;border-radius:6px"></div><svg style="left:2842px;top:1685px;" width="13" height="16" viewBox="0 0 13 16"><polygon points="2,2 2,14 11,8" fill="#9a9a9a" stroke="#9a9a9a" stroke-width="1.500" stroke-linejoin="round"/></svg><span class="u" style="left:27.0px;top:1727.0px;font-size:15.6px;color:#fff;letter-spacing:-0.42px;">Ready</span><svg style="left:98px;top:1725px;" width="25" height="22" viewBox="0 0 25 22"><path d="M2 2h21v4M2 2v17h9" fill="none" stroke="#e6e6e6" stroke-width="1.500"/><path d="M2 6h21" stroke="#e6e6e6" stroke-width="1.500"/><path d="M5 10.500h7M5 14.500h5" stroke="#e6e6e6" stroke-width="1.400"/><circle cx="17" cy="14.500" r="5.600" fill="none" stroke="#e6e6e6" stroke-width="1.500"/><circle cx="17" cy="14.500" r="2.800" fill="#e6e6e6"/></svg><svg style="left:145px;top:1723px;" width="24" height="25" viewBox="0 0 24 25"><circle cx="9" cy="3.600" r="2.300" fill="none" stroke="#e6e6e6" stroke-width="1.400"/><path d="M2 8.500c4 1.500 10 1.500 14 0M9 10v5M9 15l-4 8M9 15l3 4.500" fill="none" stroke="#e6e6e6" stroke-width="1.500" stroke-linecap="round"/><path d="M14.500 16l7 7M21.500 16l-7 7" stroke="#e6e6e6" stroke-width="1.500" stroke-linecap="round"/></svg><span class="u" style="left:173.0px;top:1727.0px;font-size:15.4px;color:#fff;font-weight:bold;letter-spacing:0.2px;">Accessibility: Investigate</span><div style="left:2445px;top:1719px;width:60px;height:32px;background:#2a2a2a"></div><svg style="left:2463px;top:1723px;" width="22" height="22" viewBox="0 0 22 22"><rect x="1.500" y="1.500" width="19" height="19" fill="none" stroke="#fff" stroke-width="1.700"/><path d="M7.800 1.500v19M14.200 1.500v19M1.500 7.800h19M1.500 14.200h19" stroke="#fff" stroke-width="1.700"/></svg><svg style="left:2523px;top:1723px;" width="24" height="22" viewBox="0 0 24 22"><rect x="1.500" y="1.500" width="20" height="19" fill="none" stroke="#fff" stroke-width="1.700"/><rect x="6.500" y="5.500" width="10" height="11" fill="none" stroke="#fff" stroke-width="1.500"/><path d="M9 9h5M9 12.500h5" stroke="#fff" stroke-width="1.300"/></svg><svg style="left:2583px;top:1723px;" width="24" height="22" viewBox="0 0 24 22"><rect x="1.500" y="1.500" width="20" height="19" fill="none" stroke="#fff" stroke-width="1.700"/><path d="M1.500 12.500h11.500V1.500M7.500 1.500v11" fill="none" stroke="#fff" stroke-width="1.700"/></svg><div style="left:2633px;top:1734px;width:12px;height:1.5px;background:#d0d0d0"></div><div style="left:2653px;top:1734px;width:148px;height:1.5px;background:#a8a8a8"></div><div style="left:2723px;top:1726px;width:8px;height:17px;background:#b4b4b4;border-radius:1px"></div><div style="left:2809px;top:1734px;width:12px;height:1.5px;background:#d0d0d0"></div><div style="left:2814.3px;top:1729px;width:1.5px;height:12px;background:#d0d0d0"></div><span class="u" style="left:2840.5px;top:1728.0px;font-size:15.6px;color:#fff;letter-spacing:-0.22px;">100%</span></div></body></html>
